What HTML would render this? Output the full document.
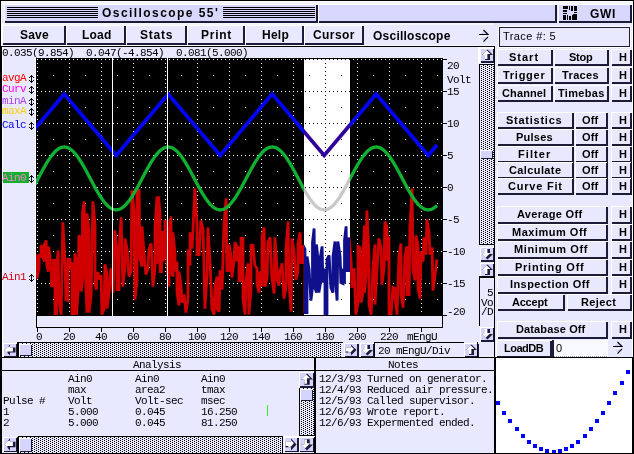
<!DOCTYPE html><html><head><meta charset="utf-8"><style>
*{margin:0;padding:0;box-sizing:border-box}
html,body{width:634px;height:454px;overflow:hidden;background:#E8E8FF}
div,span{position:absolute;display:block}
span{white-space:pre;will-change:transform}
.t{font:bold 12px "Liberation Sans",sans-serif;color:#000;line-height:18px}
.b{font:bold 12px "Liberation Sans",sans-serif;color:#000;line-height:15px}
.r{font:bold 11px "Liberation Sans",sans-serif;color:#000;line-height:14px}
.m{font:11px "Liberation Mono",monospace;letter-spacing:-0.6px;color:#000;line-height:12px}
.g{font:11px "Liberation Sans",sans-serif;color:#000;line-height:14px}
</style></head><body>
<div style="left:0px;top:0px;width:634px;height:454px;background:#E8E8FF;"></div>
<div style="left:0px;top:0px;width:634px;height:1px;background:#000;"></div>
<div style="left:0px;top:0px;width:1px;height:454px;background:#000;"></div>
<div style="left:633px;top:0px;width:1px;height:454px;background:#000;"></div>
<div style="left:0px;top:453px;width:634px;height:1px;background:#000;"></div>
<div style="left:1px;top:1px;width:632px;height:1px;background:#FFFFFF;"></div>
<div style="left:1px;top:1px;width:1px;height:45px;background:#FFFFFF;"></div>
<div style="left:632px;top:1px;width:1px;height:452px;background:#FFFFFF;"></div>
<div style="left:2px;top:2px;width:630px;height:3px;background:#F4F4FF;"></div>
<div style="left:4px;top:4px;width:312px;height:1px;background:#FFFFFF;"></div>
<div style="left:4px;top:4px;width:1px;height:17px;background:#FFFFFF;"></div>
<div style="left:5px;top:5px;width:311px;height:16px;background:#D8D8FF;"></div>
<div style="left:316px;top:5px;width:2px;height:18px;background:#1C1C38;"></div>
<div style="left:5px;top:21px;width:313px;height:2px;background:#1C1C38;"></div>
<div style="left:7px;top:7px;width:91px;height:1px;background:#000;"></div>
<div style="left:223px;top:7px;width:92px;height:1px;background:#000;"></div>
<div style="left:7px;top:9px;width:91px;height:1px;background:#000;"></div>
<div style="left:223px;top:9px;width:92px;height:1px;background:#000;"></div>
<div style="left:7px;top:11px;width:91px;height:1px;background:#000;"></div>
<div style="left:223px;top:11px;width:92px;height:1px;background:#000;"></div>
<div style="left:7px;top:13px;width:91px;height:1px;background:#000;"></div>
<div style="left:223px;top:13px;width:92px;height:1px;background:#000;"></div>
<div style="left:7px;top:15px;width:91px;height:1px;background:#000;"></div>
<div style="left:223px;top:15px;width:92px;height:1px;background:#000;"></div>
<div style="left:7px;top:17px;width:91px;height:1px;background:#000;"></div>
<div style="left:223px;top:17px;width:92px;height:1px;background:#000;"></div>
<div style="left:318px;top:4px;width:237px;height:1px;background:#FFFFFF;"></div>
<div style="left:318px;top:4px;width:1px;height:17px;background:#FFFFFF;"></div>
<div style="left:319px;top:5px;width:236px;height:16px;background:#D8D8FF;"></div>
<div style="left:555px;top:5px;width:2px;height:18px;background:#1C1C38;"></div>
<div style="left:319px;top:21px;width:238px;height:2px;background:#1C1C38;"></div>
<div style="left:558px;top:4px;width:72px;height:1px;background:#FFFFFF;"></div>
<div style="left:558px;top:4px;width:1px;height:17px;background:#FFFFFF;"></div>
<div style="left:559px;top:5px;width:71px;height:16px;background:#D8D8FF;"></div>
<div style="left:630px;top:5px;width:2px;height:18px;background:#1C1C38;"></div>
<div style="left:559px;top:21px;width:73px;height:2px;background:#1C1C38;"></div>
<svg style="position:absolute;left:0;top:0" width="634" height="30" shape-rendering="crispEdges"><g fill="#000"><rect x="563" y="6" width="5" height="3"/><rect x="569" y="6" width="1" height="4"/><rect x="571" y="6" width="2" height="5"/><rect x="574" y="6" width="3" height="5"/><rect x="563" y="10" width="4" height="2"/><rect x="563" y="13" width="4" height="1"/><rect x="574" y="12" width="3" height="1"/><rect x="563" y="15" width="3" height="5"/><rect x="567" y="15" width="1" height="5"/><rect x="569" y="16" width="2" height="4"/><rect x="572" y="15" width="5" height="5"/><rect x="573" y="14" width="4" height="1"/></g></svg>
<div style="left:2px;top:23px;width:492px;height:2px;background:#F4F4FF;"></div>
<div style="left:2px;top:25px;width:63px;height:19px;background:#FFFFFF;"></div>
<div style="left:3px;top:26px;width:61px;height:17px;background:#E8E8FF;"></div>
<div style="left:64px;top:26px;width:2px;height:19px;background:#1C1C38;"></div>
<div style="left:3px;top:43px;width:63px;height:2px;background:#1C1C38;"></div>
<div style="left:66px;top:25px;width:59px;height:19px;background:#FFFFFF;"></div>
<div style="left:67px;top:26px;width:57px;height:17px;background:#E8E8FF;"></div>
<div style="left:124px;top:26px;width:2px;height:19px;background:#1C1C38;"></div>
<div style="left:67px;top:43px;width:59px;height:2px;background:#1C1C38;"></div>
<div style="left:126px;top:25px;width:60px;height:19px;background:#FFFFFF;"></div>
<div style="left:127px;top:26px;width:58px;height:17px;background:#E8E8FF;"></div>
<div style="left:185px;top:26px;width:2px;height:19px;background:#1C1C38;"></div>
<div style="left:127px;top:43px;width:60px;height:2px;background:#1C1C38;"></div>
<div style="left:187px;top:25px;width:57px;height:19px;background:#FFFFFF;"></div>
<div style="left:188px;top:26px;width:55px;height:17px;background:#E8E8FF;"></div>
<div style="left:243px;top:26px;width:2px;height:19px;background:#1C1C38;"></div>
<div style="left:188px;top:43px;width:57px;height:2px;background:#1C1C38;"></div>
<div style="left:245px;top:25px;width:58px;height:19px;background:#FFFFFF;"></div>
<div style="left:246px;top:26px;width:56px;height:17px;background:#E8E8FF;"></div>
<div style="left:302px;top:26px;width:2px;height:19px;background:#1C1C38;"></div>
<div style="left:246px;top:43px;width:58px;height:2px;background:#1C1C38;"></div>
<div style="left:304px;top:25px;width:59px;height:19px;background:#FFFFFF;"></div>
<div style="left:305px;top:26px;width:57px;height:17px;background:#E8E8FF;"></div>
<div style="left:362px;top:26px;width:2px;height:19px;background:#1C1C38;"></div>
<div style="left:305px;top:43px;width:59px;height:2px;background:#1C1C38;"></div>
<div style="left:2px;top:45px;width:492px;height:1px;background:#F4F4FF;"></div>
<svg style="position:absolute;left:477px;top:28px" width="14" height="17" viewBox="0 0 14 17">
<path d="M2 6.5 L6.5 2 L11 6.5 Z" fill="#D4D4FF"/><path d="M2 8.8 L6.5 13.6 L11 8.8 Z" fill="#D4D4FF"/>
<path d="M2 6.5 L6.5 2 M2 8.8 L6.5 13.6 M2 8.8 L11 8.8" stroke="#FFF" stroke-width="1" fill="none"/>
<path d="M6.5 2 L11 6.5 L2 6.5 M11 8.8 L6.5 13.6" stroke="#000" stroke-width="1.1" fill="none"/></svg>
<div style="left:1px;top:46px;width:494px;height:1px;background:#000;"></div>
<div style="left:1px;top:46px;width:1px;height:408px;background:#000;"></div>
<div style="left:2px;top:47px;width:1px;height:310px;background:#FFFFFF;"></div>
<div style="left:494px;top:46px;width:1px;height:408px;background:#000;"></div>
<span class="m" style="left:2px;top:47px;">0.035(9.854)  0.047(-4.854)  0.081(5.000)</span>
<span class="m" style="left:2px;top:72px;color:#FF0000;">avgA</span>
<svg style="position:absolute;left:29px;top:75px" width="5" height="8" shape-rendering="crispEdges"><path d="M2 0h1v8h-1z M1 1h3v1h-3z M0 2h1v1h-1z M4 2h1v1h-1z M0 5h1v1h-1z M4 5h1v1h-1z M1 6h3v1h-3z" fill="#000"/></svg>
<span class="m" style="left:2px;top:83px;color:#FF00FF;">Curv</span>
<svg style="position:absolute;left:29px;top:86px" width="5" height="8" shape-rendering="crispEdges"><path d="M2 0h1v8h-1z M1 1h3v1h-3z M0 2h1v1h-1z M4 2h1v1h-1z M0 5h1v1h-1z M4 5h1v1h-1z M1 6h3v1h-3z" fill="#000"/></svg>
<span class="m" style="left:2px;top:95px;color:#B040F0;">minA</span>
<svg style="position:absolute;left:29px;top:98px" width="5" height="8" shape-rendering="crispEdges"><path d="M2 0h1v8h-1z M1 1h3v1h-3z M0 2h1v1h-1z M4 2h1v1h-1z M0 5h1v1h-1z M4 5h1v1h-1z M1 6h3v1h-3z" fill="#000"/></svg>
<span class="m" style="left:2px;top:105px;color:#FFD000;">maxA</span>
<svg style="position:absolute;left:29px;top:108px" width="5" height="8" shape-rendering="crispEdges"><path d="M2 0h1v8h-1z M1 1h3v1h-3z M0 2h1v1h-1z M4 2h1v1h-1z M0 5h1v1h-1z M4 5h1v1h-1z M1 6h3v1h-3z" fill="#000"/></svg>
<span class="m" style="left:2px;top:119px;color:#0000FF;">Calc</span>
<svg style="position:absolute;left:29px;top:122px" width="5" height="8" shape-rendering="crispEdges"><path d="M2 0h1v8h-1z M1 1h3v1h-3z M0 2h1v1h-1z M4 2h1v1h-1z M0 5h1v1h-1z M4 5h1v1h-1z M1 6h3v1h-3z" fill="#000"/></svg>
<div style="left:3px;top:172px;width:26px;height:11px;background:#10B030;"></div>
<span class="m" style="left:2px;top:172px;color:#FF80C8;">Ain0</span>
<svg style="position:absolute;left:29px;top:175px" width="5" height="8" shape-rendering="crispEdges"><path d="M2 0h1v8h-1z M1 1h3v1h-3z M0 2h1v1h-1z M4 2h1v1h-1z M0 5h1v1h-1z M4 5h1v1h-1z M1 6h3v1h-3z" fill="#000"/></svg>
<span class="m" style="left:2px;top:271px;color:#D00010;">Ain1</span>
<svg style="position:absolute;left:29px;top:274px" width="5" height="8" shape-rendering="crispEdges"><path d="M2 0h1v8h-1z M1 1h3v1h-3z M0 2h1v1h-1z M4 2h1v1h-1z M0 5h1v1h-1z M4 5h1v1h-1z M1 6h3v1h-3z" fill="#000"/></svg>
<div style="left:35px;top:57px;width:1px;height:259px;background:#FFFFFF;"></div>
<svg style="position:absolute;left:0;top:0" width="634" height="454" viewBox="0 0 634 454" shape-rendering="crispEdges">
<defs><clipPath id="bc"><rect x="304" y="59" width="46" height="256"/></clipPath><clipPath id="oc"><path d="M36 58H443V315H36Z M304 59V315H350V59Z" clip-rule="evenodd"/></clipPath></defs>
<rect x="36" y="58" width="407" height="258" fill="#000"/>
<rect x="304" y="59" width="46" height="256" fill="#FFF"/>
<path d="M37 59h1v1h-1zM37 63h1v1h-1zM37 67h1v1h-1zM37 71h1v1h-1zM37 75h1v1h-1zM37 79h1v1h-1zM37 83h1v1h-1zM37 87h1v1h-1zM37 91h1v1h-1zM37 95h1v1h-1zM37 99h1v1h-1zM37 103h1v1h-1zM37 107h1v1h-1zM37 111h1v1h-1zM37 115h1v1h-1zM37 119h1v1h-1zM37 123h1v1h-1zM37 127h1v1h-1zM37 131h1v1h-1zM37 135h1v1h-1zM37 139h1v1h-1zM37 143h1v1h-1zM37 147h1v1h-1zM37 151h1v1h-1zM37 155h1v1h-1zM37 159h1v1h-1zM37 163h1v1h-1zM37 167h1v1h-1zM37 171h1v1h-1zM37 175h1v1h-1zM37 179h1v1h-1zM37 183h1v1h-1zM37 187h1v1h-1zM37 191h1v1h-1zM37 195h1v1h-1zM37 199h1v1h-1zM37 203h1v1h-1zM37 207h1v1h-1zM37 211h1v1h-1zM37 215h1v1h-1zM37 219h1v1h-1zM37 223h1v1h-1zM37 227h1v1h-1zM37 231h1v1h-1zM37 235h1v1h-1zM37 239h1v1h-1zM37 243h1v1h-1zM37 247h1v1h-1zM37 251h1v1h-1zM37 255h1v1h-1zM37 259h1v1h-1zM37 263h1v1h-1zM37 267h1v1h-1zM37 271h1v1h-1zM37 275h1v1h-1zM37 279h1v1h-1zM37 283h1v1h-1zM37 287h1v1h-1zM37 291h1v1h-1zM37 295h1v1h-1zM37 299h1v1h-1zM37 303h1v1h-1zM37 307h1v1h-1zM37 311h1v1h-1zM41 59h1v1h-1zM41 91h1v1h-1zM41 123h1v1h-1zM41 155h1v1h-1zM41 187h1v1h-1zM41 219h1v1h-1zM41 251h1v1h-1zM41 283h1v1h-1zM45 59h1v1h-1zM45 91h1v1h-1zM45 123h1v1h-1zM45 155h1v1h-1zM45 187h1v1h-1zM45 219h1v1h-1zM45 251h1v1h-1zM45 283h1v1h-1zM49 59h1v1h-1zM49 91h1v1h-1zM49 123h1v1h-1zM49 155h1v1h-1zM49 187h1v1h-1zM49 219h1v1h-1zM49 251h1v1h-1zM49 283h1v1h-1zM53 59h1v1h-1zM53 75h1v1h-1zM53 91h1v1h-1zM53 107h1v1h-1zM53 123h1v1h-1zM53 139h1v1h-1zM53 155h1v1h-1zM53 171h1v1h-1zM53 187h1v1h-1zM53 203h1v1h-1zM53 219h1v1h-1zM53 235h1v1h-1zM53 251h1v1h-1zM53 267h1v1h-1zM53 283h1v1h-1zM53 299h1v1h-1zM57 59h1v1h-1zM57 91h1v1h-1zM57 123h1v1h-1zM57 155h1v1h-1zM57 187h1v1h-1zM57 219h1v1h-1zM57 251h1v1h-1zM57 283h1v1h-1zM61 59h1v1h-1zM61 91h1v1h-1zM61 123h1v1h-1zM61 155h1v1h-1zM61 187h1v1h-1zM61 219h1v1h-1zM61 251h1v1h-1zM61 283h1v1h-1zM65 59h1v1h-1zM65 91h1v1h-1zM65 123h1v1h-1zM65 155h1v1h-1zM65 187h1v1h-1zM65 219h1v1h-1zM65 251h1v1h-1zM65 283h1v1h-1zM69 59h1v1h-1zM69 63h1v1h-1zM69 67h1v1h-1zM69 71h1v1h-1zM69 75h1v1h-1zM69 79h1v1h-1zM69 83h1v1h-1zM69 87h1v1h-1zM69 91h1v1h-1zM69 95h1v1h-1zM69 99h1v1h-1zM69 103h1v1h-1zM69 107h1v1h-1zM69 111h1v1h-1zM69 115h1v1h-1zM69 119h1v1h-1zM69 123h1v1h-1zM69 127h1v1h-1zM69 131h1v1h-1zM69 135h1v1h-1zM69 139h1v1h-1zM69 143h1v1h-1zM69 147h1v1h-1zM69 151h1v1h-1zM69 155h1v1h-1zM69 159h1v1h-1zM69 163h1v1h-1zM69 167h1v1h-1zM69 171h1v1h-1zM69 175h1v1h-1zM69 179h1v1h-1zM69 183h1v1h-1zM69 187h1v1h-1zM69 191h1v1h-1zM69 195h1v1h-1zM69 199h1v1h-1zM69 203h1v1h-1zM69 207h1v1h-1zM69 211h1v1h-1zM69 215h1v1h-1zM69 219h1v1h-1zM69 223h1v1h-1zM69 227h1v1h-1zM69 231h1v1h-1zM69 235h1v1h-1zM69 239h1v1h-1zM69 243h1v1h-1zM69 247h1v1h-1zM69 251h1v1h-1zM69 255h1v1h-1zM69 259h1v1h-1zM69 263h1v1h-1zM69 267h1v1h-1zM69 271h1v1h-1zM69 275h1v1h-1zM69 279h1v1h-1zM69 283h1v1h-1zM69 287h1v1h-1zM69 291h1v1h-1zM69 295h1v1h-1zM69 299h1v1h-1zM69 303h1v1h-1zM69 307h1v1h-1zM69 311h1v1h-1zM73 59h1v1h-1zM73 91h1v1h-1zM73 123h1v1h-1zM73 155h1v1h-1zM73 187h1v1h-1zM73 219h1v1h-1zM73 251h1v1h-1zM73 283h1v1h-1zM77 59h1v1h-1zM77 91h1v1h-1zM77 123h1v1h-1zM77 155h1v1h-1zM77 187h1v1h-1zM77 219h1v1h-1zM77 251h1v1h-1zM77 283h1v1h-1zM81 59h1v1h-1zM81 91h1v1h-1zM81 123h1v1h-1zM81 155h1v1h-1zM81 187h1v1h-1zM81 219h1v1h-1zM81 251h1v1h-1zM81 283h1v1h-1zM85 59h1v1h-1zM85 75h1v1h-1zM85 91h1v1h-1zM85 107h1v1h-1zM85 123h1v1h-1zM85 139h1v1h-1zM85 155h1v1h-1zM85 171h1v1h-1zM85 187h1v1h-1zM85 203h1v1h-1zM85 219h1v1h-1zM85 235h1v1h-1zM85 251h1v1h-1zM85 267h1v1h-1zM85 283h1v1h-1zM85 299h1v1h-1zM89 59h1v1h-1zM89 91h1v1h-1zM89 123h1v1h-1zM89 155h1v1h-1zM89 187h1v1h-1zM89 219h1v1h-1zM89 251h1v1h-1zM89 283h1v1h-1zM93 59h1v1h-1zM93 91h1v1h-1zM93 123h1v1h-1zM93 155h1v1h-1zM93 187h1v1h-1zM93 219h1v1h-1zM93 251h1v1h-1zM93 283h1v1h-1zM97 59h1v1h-1zM97 91h1v1h-1zM97 123h1v1h-1zM97 155h1v1h-1zM97 187h1v1h-1zM97 219h1v1h-1zM97 251h1v1h-1zM97 283h1v1h-1zM101 59h1v1h-1zM101 63h1v1h-1zM101 67h1v1h-1zM101 71h1v1h-1zM101 75h1v1h-1zM101 79h1v1h-1zM101 83h1v1h-1zM101 87h1v1h-1zM101 91h1v1h-1zM101 95h1v1h-1zM101 99h1v1h-1zM101 103h1v1h-1zM101 107h1v1h-1zM101 111h1v1h-1zM101 115h1v1h-1zM101 119h1v1h-1zM101 123h1v1h-1zM101 127h1v1h-1zM101 131h1v1h-1zM101 135h1v1h-1zM101 139h1v1h-1zM101 143h1v1h-1zM101 147h1v1h-1zM101 151h1v1h-1zM101 155h1v1h-1zM101 159h1v1h-1zM101 163h1v1h-1zM101 167h1v1h-1zM101 171h1v1h-1zM101 175h1v1h-1zM101 179h1v1h-1zM101 183h1v1h-1zM101 187h1v1h-1zM101 191h1v1h-1zM101 195h1v1h-1zM101 199h1v1h-1zM101 203h1v1h-1zM101 207h1v1h-1zM101 211h1v1h-1zM101 215h1v1h-1zM101 219h1v1h-1zM101 223h1v1h-1zM101 227h1v1h-1zM101 231h1v1h-1zM101 235h1v1h-1zM101 239h1v1h-1zM101 243h1v1h-1zM101 247h1v1h-1zM101 251h1v1h-1zM101 255h1v1h-1zM101 259h1v1h-1zM101 263h1v1h-1zM101 267h1v1h-1zM101 271h1v1h-1zM101 275h1v1h-1zM101 279h1v1h-1zM101 283h1v1h-1zM101 287h1v1h-1zM101 291h1v1h-1zM101 295h1v1h-1zM101 299h1v1h-1zM101 303h1v1h-1zM101 307h1v1h-1zM101 311h1v1h-1zM105 59h1v1h-1zM105 91h1v1h-1zM105 123h1v1h-1zM105 155h1v1h-1zM105 187h1v1h-1zM105 219h1v1h-1zM105 251h1v1h-1zM105 283h1v1h-1zM109 59h1v1h-1zM109 91h1v1h-1zM109 123h1v1h-1zM109 155h1v1h-1zM109 187h1v1h-1zM109 219h1v1h-1zM109 251h1v1h-1zM109 283h1v1h-1zM113 59h1v1h-1zM113 91h1v1h-1zM113 123h1v1h-1zM113 155h1v1h-1zM113 187h1v1h-1zM113 219h1v1h-1zM113 251h1v1h-1zM113 283h1v1h-1zM117 59h1v1h-1zM117 75h1v1h-1zM117 91h1v1h-1zM117 107h1v1h-1zM117 123h1v1h-1zM117 139h1v1h-1zM117 155h1v1h-1zM117 171h1v1h-1zM117 187h1v1h-1zM117 203h1v1h-1zM117 219h1v1h-1zM117 235h1v1h-1zM117 251h1v1h-1zM117 267h1v1h-1zM117 283h1v1h-1zM117 299h1v1h-1zM121 59h1v1h-1zM121 91h1v1h-1zM121 123h1v1h-1zM121 155h1v1h-1zM121 187h1v1h-1zM121 219h1v1h-1zM121 251h1v1h-1zM121 283h1v1h-1zM125 59h1v1h-1zM125 91h1v1h-1zM125 123h1v1h-1zM125 155h1v1h-1zM125 187h1v1h-1zM125 219h1v1h-1zM125 251h1v1h-1zM125 283h1v1h-1zM129 59h1v1h-1zM129 91h1v1h-1zM129 123h1v1h-1zM129 155h1v1h-1zM129 187h1v1h-1zM129 219h1v1h-1zM129 251h1v1h-1zM129 283h1v1h-1zM133 59h1v1h-1zM133 63h1v1h-1zM133 67h1v1h-1zM133 71h1v1h-1zM133 75h1v1h-1zM133 79h1v1h-1zM133 83h1v1h-1zM133 87h1v1h-1zM133 91h1v1h-1zM133 95h1v1h-1zM133 99h1v1h-1zM133 103h1v1h-1zM133 107h1v1h-1zM133 111h1v1h-1zM133 115h1v1h-1zM133 119h1v1h-1zM133 123h1v1h-1zM133 127h1v1h-1zM133 131h1v1h-1zM133 135h1v1h-1zM133 139h1v1h-1zM133 143h1v1h-1zM133 147h1v1h-1zM133 151h1v1h-1zM133 155h1v1h-1zM133 159h1v1h-1zM133 163h1v1h-1zM133 167h1v1h-1zM133 171h1v1h-1zM133 175h1v1h-1zM133 179h1v1h-1zM133 183h1v1h-1zM133 187h1v1h-1zM133 191h1v1h-1zM133 195h1v1h-1zM133 199h1v1h-1zM133 203h1v1h-1zM133 207h1v1h-1zM133 211h1v1h-1zM133 215h1v1h-1zM133 219h1v1h-1zM133 223h1v1h-1zM133 227h1v1h-1zM133 231h1v1h-1zM133 235h1v1h-1zM133 239h1v1h-1zM133 243h1v1h-1zM133 247h1v1h-1zM133 251h1v1h-1zM133 255h1v1h-1zM133 259h1v1h-1zM133 263h1v1h-1zM133 267h1v1h-1zM133 271h1v1h-1zM133 275h1v1h-1zM133 279h1v1h-1zM133 283h1v1h-1zM133 287h1v1h-1zM133 291h1v1h-1zM133 295h1v1h-1zM133 299h1v1h-1zM133 303h1v1h-1zM133 307h1v1h-1zM133 311h1v1h-1zM137 59h1v1h-1zM137 91h1v1h-1zM137 123h1v1h-1zM137 155h1v1h-1zM137 187h1v1h-1zM137 219h1v1h-1zM137 251h1v1h-1zM137 283h1v1h-1zM141 59h1v1h-1zM141 91h1v1h-1zM141 123h1v1h-1zM141 155h1v1h-1zM141 187h1v1h-1zM141 219h1v1h-1zM141 251h1v1h-1zM141 283h1v1h-1zM145 59h1v1h-1zM145 91h1v1h-1zM145 123h1v1h-1zM145 155h1v1h-1zM145 187h1v1h-1zM145 219h1v1h-1zM145 251h1v1h-1zM145 283h1v1h-1zM149 59h1v1h-1zM149 75h1v1h-1zM149 91h1v1h-1zM149 107h1v1h-1zM149 123h1v1h-1zM149 139h1v1h-1zM149 155h1v1h-1zM149 171h1v1h-1zM149 187h1v1h-1zM149 203h1v1h-1zM149 219h1v1h-1zM149 235h1v1h-1zM149 251h1v1h-1zM149 267h1v1h-1zM149 283h1v1h-1zM149 299h1v1h-1zM153 59h1v1h-1zM153 91h1v1h-1zM153 123h1v1h-1zM153 155h1v1h-1zM153 187h1v1h-1zM153 219h1v1h-1zM153 251h1v1h-1zM153 283h1v1h-1zM157 59h1v1h-1zM157 91h1v1h-1zM157 123h1v1h-1zM157 155h1v1h-1zM157 187h1v1h-1zM157 219h1v1h-1zM157 251h1v1h-1zM157 283h1v1h-1zM161 59h1v1h-1zM161 91h1v1h-1zM161 123h1v1h-1zM161 155h1v1h-1zM161 187h1v1h-1zM161 219h1v1h-1zM161 251h1v1h-1zM161 283h1v1h-1zM165 59h1v1h-1zM165 63h1v1h-1zM165 67h1v1h-1zM165 71h1v1h-1zM165 75h1v1h-1zM165 79h1v1h-1zM165 83h1v1h-1zM165 87h1v1h-1zM165 91h1v1h-1zM165 95h1v1h-1zM165 99h1v1h-1zM165 103h1v1h-1zM165 107h1v1h-1zM165 111h1v1h-1zM165 115h1v1h-1zM165 119h1v1h-1zM165 123h1v1h-1zM165 127h1v1h-1zM165 131h1v1h-1zM165 135h1v1h-1zM165 139h1v1h-1zM165 143h1v1h-1zM165 147h1v1h-1zM165 151h1v1h-1zM165 155h1v1h-1zM165 159h1v1h-1zM165 163h1v1h-1zM165 167h1v1h-1zM165 171h1v1h-1zM165 175h1v1h-1zM165 179h1v1h-1zM165 183h1v1h-1zM165 187h1v1h-1zM165 191h1v1h-1zM165 195h1v1h-1zM165 199h1v1h-1zM165 203h1v1h-1zM165 207h1v1h-1zM165 211h1v1h-1zM165 215h1v1h-1zM165 219h1v1h-1zM165 223h1v1h-1zM165 227h1v1h-1zM165 231h1v1h-1zM165 235h1v1h-1zM165 239h1v1h-1zM165 243h1v1h-1zM165 247h1v1h-1zM165 251h1v1h-1zM165 255h1v1h-1zM165 259h1v1h-1zM165 263h1v1h-1zM165 267h1v1h-1zM165 271h1v1h-1zM165 275h1v1h-1zM165 279h1v1h-1zM165 283h1v1h-1zM165 287h1v1h-1zM165 291h1v1h-1zM165 295h1v1h-1zM165 299h1v1h-1zM165 303h1v1h-1zM165 307h1v1h-1zM165 311h1v1h-1zM169 59h1v1h-1zM169 91h1v1h-1zM169 123h1v1h-1zM169 155h1v1h-1zM169 187h1v1h-1zM169 219h1v1h-1zM169 251h1v1h-1zM169 283h1v1h-1zM173 59h1v1h-1zM173 91h1v1h-1zM173 123h1v1h-1zM173 155h1v1h-1zM173 187h1v1h-1zM173 219h1v1h-1zM173 251h1v1h-1zM173 283h1v1h-1zM177 59h1v1h-1zM177 91h1v1h-1zM177 123h1v1h-1zM177 155h1v1h-1zM177 187h1v1h-1zM177 219h1v1h-1zM177 251h1v1h-1zM177 283h1v1h-1zM181 59h1v1h-1zM181 75h1v1h-1zM181 91h1v1h-1zM181 107h1v1h-1zM181 123h1v1h-1zM181 139h1v1h-1zM181 155h1v1h-1zM181 171h1v1h-1zM181 187h1v1h-1zM181 203h1v1h-1zM181 219h1v1h-1zM181 235h1v1h-1zM181 251h1v1h-1zM181 267h1v1h-1zM181 283h1v1h-1zM181 299h1v1h-1zM185 59h1v1h-1zM185 91h1v1h-1zM185 123h1v1h-1zM185 155h1v1h-1zM185 187h1v1h-1zM185 219h1v1h-1zM185 251h1v1h-1zM185 283h1v1h-1zM189 59h1v1h-1zM189 91h1v1h-1zM189 123h1v1h-1zM189 155h1v1h-1zM189 187h1v1h-1zM189 219h1v1h-1zM189 251h1v1h-1zM189 283h1v1h-1zM193 59h1v1h-1zM193 91h1v1h-1zM193 123h1v1h-1zM193 155h1v1h-1zM193 187h1v1h-1zM193 219h1v1h-1zM193 251h1v1h-1zM193 283h1v1h-1zM197 59h1v1h-1zM197 63h1v1h-1zM197 67h1v1h-1zM197 71h1v1h-1zM197 75h1v1h-1zM197 79h1v1h-1zM197 83h1v1h-1zM197 87h1v1h-1zM197 91h1v1h-1zM197 95h1v1h-1zM197 99h1v1h-1zM197 103h1v1h-1zM197 107h1v1h-1zM197 111h1v1h-1zM197 115h1v1h-1zM197 119h1v1h-1zM197 123h1v1h-1zM197 127h1v1h-1zM197 131h1v1h-1zM197 135h1v1h-1zM197 139h1v1h-1zM197 143h1v1h-1zM197 147h1v1h-1zM197 151h1v1h-1zM197 155h1v1h-1zM197 159h1v1h-1zM197 163h1v1h-1zM197 167h1v1h-1zM197 171h1v1h-1zM197 175h1v1h-1zM197 179h1v1h-1zM197 183h1v1h-1zM197 187h1v1h-1zM197 191h1v1h-1zM197 195h1v1h-1zM197 199h1v1h-1zM197 203h1v1h-1zM197 207h1v1h-1zM197 211h1v1h-1zM197 215h1v1h-1zM197 219h1v1h-1zM197 223h1v1h-1zM197 227h1v1h-1zM197 231h1v1h-1zM197 235h1v1h-1zM197 239h1v1h-1zM197 243h1v1h-1zM197 247h1v1h-1zM197 251h1v1h-1zM197 255h1v1h-1zM197 259h1v1h-1zM197 263h1v1h-1zM197 267h1v1h-1zM197 271h1v1h-1zM197 275h1v1h-1zM197 279h1v1h-1zM197 283h1v1h-1zM197 287h1v1h-1zM197 291h1v1h-1zM197 295h1v1h-1zM197 299h1v1h-1zM197 303h1v1h-1zM197 307h1v1h-1zM197 311h1v1h-1zM201 59h1v1h-1zM201 91h1v1h-1zM201 123h1v1h-1zM201 155h1v1h-1zM201 187h1v1h-1zM201 219h1v1h-1zM201 251h1v1h-1zM201 283h1v1h-1zM205 59h1v1h-1zM205 91h1v1h-1zM205 123h1v1h-1zM205 155h1v1h-1zM205 187h1v1h-1zM205 219h1v1h-1zM205 251h1v1h-1zM205 283h1v1h-1zM209 59h1v1h-1zM209 91h1v1h-1zM209 123h1v1h-1zM209 155h1v1h-1zM209 187h1v1h-1zM209 219h1v1h-1zM209 251h1v1h-1zM209 283h1v1h-1zM213 59h1v1h-1zM213 75h1v1h-1zM213 91h1v1h-1zM213 107h1v1h-1zM213 123h1v1h-1zM213 139h1v1h-1zM213 155h1v1h-1zM213 171h1v1h-1zM213 187h1v1h-1zM213 203h1v1h-1zM213 219h1v1h-1zM213 235h1v1h-1zM213 251h1v1h-1zM213 267h1v1h-1zM213 283h1v1h-1zM213 299h1v1h-1zM217 59h1v1h-1zM217 91h1v1h-1zM217 123h1v1h-1zM217 155h1v1h-1zM217 187h1v1h-1zM217 219h1v1h-1zM217 251h1v1h-1zM217 283h1v1h-1zM221 59h1v1h-1zM221 91h1v1h-1zM221 123h1v1h-1zM221 155h1v1h-1zM221 187h1v1h-1zM221 219h1v1h-1zM221 251h1v1h-1zM221 283h1v1h-1zM225 59h1v1h-1zM225 91h1v1h-1zM225 123h1v1h-1zM225 155h1v1h-1zM225 187h1v1h-1zM225 219h1v1h-1zM225 251h1v1h-1zM225 283h1v1h-1zM229 59h1v1h-1zM229 63h1v1h-1zM229 67h1v1h-1zM229 71h1v1h-1zM229 75h1v1h-1zM229 79h1v1h-1zM229 83h1v1h-1zM229 87h1v1h-1zM229 91h1v1h-1zM229 95h1v1h-1zM229 99h1v1h-1zM229 103h1v1h-1zM229 107h1v1h-1zM229 111h1v1h-1zM229 115h1v1h-1zM229 119h1v1h-1zM229 123h1v1h-1zM229 127h1v1h-1zM229 131h1v1h-1zM229 135h1v1h-1zM229 139h1v1h-1zM229 143h1v1h-1zM229 147h1v1h-1zM229 151h1v1h-1zM229 155h1v1h-1zM229 159h1v1h-1zM229 163h1v1h-1zM229 167h1v1h-1zM229 171h1v1h-1zM229 175h1v1h-1zM229 179h1v1h-1zM229 183h1v1h-1zM229 187h1v1h-1zM229 191h1v1h-1zM229 195h1v1h-1zM229 199h1v1h-1zM229 203h1v1h-1zM229 207h1v1h-1zM229 211h1v1h-1zM229 215h1v1h-1zM229 219h1v1h-1zM229 223h1v1h-1zM229 227h1v1h-1zM229 231h1v1h-1zM229 235h1v1h-1zM229 239h1v1h-1zM229 243h1v1h-1zM229 247h1v1h-1zM229 251h1v1h-1zM229 255h1v1h-1zM229 259h1v1h-1zM229 263h1v1h-1zM229 267h1v1h-1zM229 271h1v1h-1zM229 275h1v1h-1zM229 279h1v1h-1zM229 283h1v1h-1zM229 287h1v1h-1zM229 291h1v1h-1zM229 295h1v1h-1zM229 299h1v1h-1zM229 303h1v1h-1zM229 307h1v1h-1zM229 311h1v1h-1zM233 59h1v1h-1zM233 91h1v1h-1zM233 123h1v1h-1zM233 155h1v1h-1zM233 187h1v1h-1zM233 219h1v1h-1zM233 251h1v1h-1zM233 283h1v1h-1zM237 59h1v1h-1zM237 91h1v1h-1zM237 123h1v1h-1zM237 155h1v1h-1zM237 187h1v1h-1zM237 219h1v1h-1zM237 251h1v1h-1zM237 283h1v1h-1zM241 59h1v1h-1zM241 91h1v1h-1zM241 123h1v1h-1zM241 155h1v1h-1zM241 187h1v1h-1zM241 219h1v1h-1zM241 251h1v1h-1zM241 283h1v1h-1zM245 59h1v1h-1zM245 75h1v1h-1zM245 91h1v1h-1zM245 107h1v1h-1zM245 123h1v1h-1zM245 139h1v1h-1zM245 155h1v1h-1zM245 171h1v1h-1zM245 187h1v1h-1zM245 203h1v1h-1zM245 219h1v1h-1zM245 235h1v1h-1zM245 251h1v1h-1zM245 267h1v1h-1zM245 283h1v1h-1zM245 299h1v1h-1zM249 59h1v1h-1zM249 91h1v1h-1zM249 123h1v1h-1zM249 155h1v1h-1zM249 187h1v1h-1zM249 219h1v1h-1zM249 251h1v1h-1zM249 283h1v1h-1zM253 59h1v1h-1zM253 91h1v1h-1zM253 123h1v1h-1zM253 155h1v1h-1zM253 187h1v1h-1zM253 219h1v1h-1zM253 251h1v1h-1zM253 283h1v1h-1zM257 59h1v1h-1zM257 91h1v1h-1zM257 123h1v1h-1zM257 155h1v1h-1zM257 187h1v1h-1zM257 219h1v1h-1zM257 251h1v1h-1zM257 283h1v1h-1zM261 59h1v1h-1zM261 63h1v1h-1zM261 67h1v1h-1zM261 71h1v1h-1zM261 75h1v1h-1zM261 79h1v1h-1zM261 83h1v1h-1zM261 87h1v1h-1zM261 91h1v1h-1zM261 95h1v1h-1zM261 99h1v1h-1zM261 103h1v1h-1zM261 107h1v1h-1zM261 111h1v1h-1zM261 115h1v1h-1zM261 119h1v1h-1zM261 123h1v1h-1zM261 127h1v1h-1zM261 131h1v1h-1zM261 135h1v1h-1zM261 139h1v1h-1zM261 143h1v1h-1zM261 147h1v1h-1zM261 151h1v1h-1zM261 155h1v1h-1zM261 159h1v1h-1zM261 163h1v1h-1zM261 167h1v1h-1zM261 171h1v1h-1zM261 175h1v1h-1zM261 179h1v1h-1zM261 183h1v1h-1zM261 187h1v1h-1zM261 191h1v1h-1zM261 195h1v1h-1zM261 199h1v1h-1zM261 203h1v1h-1zM261 207h1v1h-1zM261 211h1v1h-1zM261 215h1v1h-1zM261 219h1v1h-1zM261 223h1v1h-1zM261 227h1v1h-1zM261 231h1v1h-1zM261 235h1v1h-1zM261 239h1v1h-1zM261 243h1v1h-1zM261 247h1v1h-1zM261 251h1v1h-1zM261 255h1v1h-1zM261 259h1v1h-1zM261 263h1v1h-1zM261 267h1v1h-1zM261 271h1v1h-1zM261 275h1v1h-1zM261 279h1v1h-1zM261 283h1v1h-1zM261 287h1v1h-1zM261 291h1v1h-1zM261 295h1v1h-1zM261 299h1v1h-1zM261 303h1v1h-1zM261 307h1v1h-1zM261 311h1v1h-1zM265 59h1v1h-1zM265 91h1v1h-1zM265 123h1v1h-1zM265 155h1v1h-1zM265 187h1v1h-1zM265 219h1v1h-1zM265 251h1v1h-1zM265 283h1v1h-1zM269 59h1v1h-1zM269 91h1v1h-1zM269 123h1v1h-1zM269 155h1v1h-1zM269 187h1v1h-1zM269 219h1v1h-1zM269 251h1v1h-1zM269 283h1v1h-1zM273 59h1v1h-1zM273 91h1v1h-1zM273 123h1v1h-1zM273 155h1v1h-1zM273 187h1v1h-1zM273 219h1v1h-1zM273 251h1v1h-1zM273 283h1v1h-1zM277 59h1v1h-1zM277 75h1v1h-1zM277 91h1v1h-1zM277 107h1v1h-1zM277 123h1v1h-1zM277 139h1v1h-1zM277 155h1v1h-1zM277 171h1v1h-1zM277 187h1v1h-1zM277 203h1v1h-1zM277 219h1v1h-1zM277 235h1v1h-1zM277 251h1v1h-1zM277 267h1v1h-1zM277 283h1v1h-1zM277 299h1v1h-1zM281 59h1v1h-1zM281 91h1v1h-1zM281 123h1v1h-1zM281 155h1v1h-1zM281 187h1v1h-1zM281 219h1v1h-1zM281 251h1v1h-1zM281 283h1v1h-1zM285 59h1v1h-1zM285 91h1v1h-1zM285 123h1v1h-1zM285 155h1v1h-1zM285 187h1v1h-1zM285 219h1v1h-1zM285 251h1v1h-1zM285 283h1v1h-1zM289 59h1v1h-1zM289 91h1v1h-1zM289 123h1v1h-1zM289 155h1v1h-1zM289 187h1v1h-1zM289 219h1v1h-1zM289 251h1v1h-1zM289 283h1v1h-1zM293 59h1v1h-1zM293 63h1v1h-1zM293 67h1v1h-1zM293 71h1v1h-1zM293 75h1v1h-1zM293 79h1v1h-1zM293 83h1v1h-1zM293 87h1v1h-1zM293 91h1v1h-1zM293 95h1v1h-1zM293 99h1v1h-1zM293 103h1v1h-1zM293 107h1v1h-1zM293 111h1v1h-1zM293 115h1v1h-1zM293 119h1v1h-1zM293 123h1v1h-1zM293 127h1v1h-1zM293 131h1v1h-1zM293 135h1v1h-1zM293 139h1v1h-1zM293 143h1v1h-1zM293 147h1v1h-1zM293 151h1v1h-1zM293 155h1v1h-1zM293 159h1v1h-1zM293 163h1v1h-1zM293 167h1v1h-1zM293 171h1v1h-1zM293 175h1v1h-1zM293 179h1v1h-1zM293 183h1v1h-1zM293 187h1v1h-1zM293 191h1v1h-1zM293 195h1v1h-1zM293 199h1v1h-1zM293 203h1v1h-1zM293 207h1v1h-1zM293 211h1v1h-1zM293 215h1v1h-1zM293 219h1v1h-1zM293 223h1v1h-1zM293 227h1v1h-1zM293 231h1v1h-1zM293 235h1v1h-1zM293 239h1v1h-1zM293 243h1v1h-1zM293 247h1v1h-1zM293 251h1v1h-1zM293 255h1v1h-1zM293 259h1v1h-1zM293 263h1v1h-1zM293 267h1v1h-1zM293 271h1v1h-1zM293 275h1v1h-1zM293 279h1v1h-1zM293 283h1v1h-1zM293 287h1v1h-1zM293 291h1v1h-1zM293 295h1v1h-1zM293 299h1v1h-1zM293 303h1v1h-1zM293 307h1v1h-1zM293 311h1v1h-1zM297 59h1v1h-1zM297 91h1v1h-1zM297 123h1v1h-1zM297 155h1v1h-1zM297 187h1v1h-1zM297 219h1v1h-1zM297 251h1v1h-1zM297 283h1v1h-1zM301 59h1v1h-1zM301 91h1v1h-1zM301 123h1v1h-1zM301 155h1v1h-1zM301 187h1v1h-1zM301 219h1v1h-1zM301 251h1v1h-1zM301 283h1v1h-1zM353 59h1v1h-1zM353 91h1v1h-1zM353 123h1v1h-1zM353 155h1v1h-1zM353 187h1v1h-1zM353 219h1v1h-1zM353 251h1v1h-1zM353 283h1v1h-1zM357 59h1v1h-1zM357 63h1v1h-1zM357 67h1v1h-1zM357 71h1v1h-1zM357 75h1v1h-1zM357 79h1v1h-1zM357 83h1v1h-1zM357 87h1v1h-1zM357 91h1v1h-1zM357 95h1v1h-1zM357 99h1v1h-1zM357 103h1v1h-1zM357 107h1v1h-1zM357 111h1v1h-1zM357 115h1v1h-1zM357 119h1v1h-1zM357 123h1v1h-1zM357 127h1v1h-1zM357 131h1v1h-1zM357 135h1v1h-1zM357 139h1v1h-1zM357 143h1v1h-1zM357 147h1v1h-1zM357 151h1v1h-1zM357 155h1v1h-1zM357 159h1v1h-1zM357 163h1v1h-1zM357 167h1v1h-1zM357 171h1v1h-1zM357 175h1v1h-1zM357 179h1v1h-1zM357 183h1v1h-1zM357 187h1v1h-1zM357 191h1v1h-1zM357 195h1v1h-1zM357 199h1v1h-1zM357 203h1v1h-1zM357 207h1v1h-1zM357 211h1v1h-1zM357 215h1v1h-1zM357 219h1v1h-1zM357 223h1v1h-1zM357 227h1v1h-1zM357 231h1v1h-1zM357 235h1v1h-1zM357 239h1v1h-1zM357 243h1v1h-1zM357 247h1v1h-1zM357 251h1v1h-1zM357 255h1v1h-1zM357 259h1v1h-1zM357 263h1v1h-1zM357 267h1v1h-1zM357 271h1v1h-1zM357 275h1v1h-1zM357 279h1v1h-1zM357 283h1v1h-1zM357 287h1v1h-1zM357 291h1v1h-1zM357 295h1v1h-1zM357 299h1v1h-1zM357 303h1v1h-1zM357 307h1v1h-1zM357 311h1v1h-1zM361 59h1v1h-1zM361 91h1v1h-1zM361 123h1v1h-1zM361 155h1v1h-1zM361 187h1v1h-1zM361 219h1v1h-1zM361 251h1v1h-1zM361 283h1v1h-1zM365 59h1v1h-1zM365 91h1v1h-1zM365 123h1v1h-1zM365 155h1v1h-1zM365 187h1v1h-1zM365 219h1v1h-1zM365 251h1v1h-1zM365 283h1v1h-1zM369 59h1v1h-1zM369 91h1v1h-1zM369 123h1v1h-1zM369 155h1v1h-1zM369 187h1v1h-1zM369 219h1v1h-1zM369 251h1v1h-1zM369 283h1v1h-1zM373 59h1v1h-1zM373 75h1v1h-1zM373 91h1v1h-1zM373 107h1v1h-1zM373 123h1v1h-1zM373 139h1v1h-1zM373 155h1v1h-1zM373 171h1v1h-1zM373 187h1v1h-1zM373 203h1v1h-1zM373 219h1v1h-1zM373 235h1v1h-1zM373 251h1v1h-1zM373 267h1v1h-1zM373 283h1v1h-1zM373 299h1v1h-1zM377 59h1v1h-1zM377 91h1v1h-1zM377 123h1v1h-1zM377 155h1v1h-1zM377 187h1v1h-1zM377 219h1v1h-1zM377 251h1v1h-1zM377 283h1v1h-1zM381 59h1v1h-1zM381 91h1v1h-1zM381 123h1v1h-1zM381 155h1v1h-1zM381 187h1v1h-1zM381 219h1v1h-1zM381 251h1v1h-1zM381 283h1v1h-1zM385 59h1v1h-1zM385 91h1v1h-1zM385 123h1v1h-1zM385 155h1v1h-1zM385 187h1v1h-1zM385 219h1v1h-1zM385 251h1v1h-1zM385 283h1v1h-1zM389 59h1v1h-1zM389 63h1v1h-1zM389 67h1v1h-1zM389 71h1v1h-1zM389 75h1v1h-1zM389 79h1v1h-1zM389 83h1v1h-1zM389 87h1v1h-1zM389 91h1v1h-1zM389 95h1v1h-1zM389 99h1v1h-1zM389 103h1v1h-1zM389 107h1v1h-1zM389 111h1v1h-1zM389 115h1v1h-1zM389 119h1v1h-1zM389 123h1v1h-1zM389 127h1v1h-1zM389 131h1v1h-1zM389 135h1v1h-1zM389 139h1v1h-1zM389 143h1v1h-1zM389 147h1v1h-1zM389 151h1v1h-1zM389 155h1v1h-1zM389 159h1v1h-1zM389 163h1v1h-1zM389 167h1v1h-1zM389 171h1v1h-1zM389 175h1v1h-1zM389 179h1v1h-1zM389 183h1v1h-1zM389 187h1v1h-1zM389 191h1v1h-1zM389 195h1v1h-1zM389 199h1v1h-1zM389 203h1v1h-1zM389 207h1v1h-1zM389 211h1v1h-1zM389 215h1v1h-1zM389 219h1v1h-1zM389 223h1v1h-1zM389 227h1v1h-1zM389 231h1v1h-1zM389 235h1v1h-1zM389 239h1v1h-1zM389 243h1v1h-1zM389 247h1v1h-1zM389 251h1v1h-1zM389 255h1v1h-1zM389 259h1v1h-1zM389 263h1v1h-1zM389 267h1v1h-1zM389 271h1v1h-1zM389 275h1v1h-1zM389 279h1v1h-1zM389 283h1v1h-1zM389 287h1v1h-1zM389 291h1v1h-1zM389 295h1v1h-1zM389 299h1v1h-1zM389 303h1v1h-1zM389 307h1v1h-1zM389 311h1v1h-1zM393 59h1v1h-1zM393 91h1v1h-1zM393 123h1v1h-1zM393 155h1v1h-1zM393 187h1v1h-1zM393 219h1v1h-1zM393 251h1v1h-1zM393 283h1v1h-1zM397 59h1v1h-1zM397 91h1v1h-1zM397 123h1v1h-1zM397 155h1v1h-1zM397 187h1v1h-1zM397 219h1v1h-1zM397 251h1v1h-1zM397 283h1v1h-1zM401 59h1v1h-1zM401 91h1v1h-1zM401 123h1v1h-1zM401 155h1v1h-1zM401 187h1v1h-1zM401 219h1v1h-1zM401 251h1v1h-1zM401 283h1v1h-1zM405 59h1v1h-1zM405 75h1v1h-1zM405 91h1v1h-1zM405 107h1v1h-1zM405 123h1v1h-1zM405 139h1v1h-1zM405 155h1v1h-1zM405 171h1v1h-1zM405 187h1v1h-1zM405 203h1v1h-1zM405 219h1v1h-1zM405 235h1v1h-1zM405 251h1v1h-1zM405 267h1v1h-1zM405 283h1v1h-1zM405 299h1v1h-1zM409 59h1v1h-1zM409 91h1v1h-1zM409 123h1v1h-1zM409 155h1v1h-1zM409 187h1v1h-1zM409 219h1v1h-1zM409 251h1v1h-1zM409 283h1v1h-1zM413 59h1v1h-1zM413 91h1v1h-1zM413 123h1v1h-1zM413 155h1v1h-1zM413 187h1v1h-1zM413 219h1v1h-1zM413 251h1v1h-1zM413 283h1v1h-1zM417 59h1v1h-1zM417 91h1v1h-1zM417 123h1v1h-1zM417 155h1v1h-1zM417 187h1v1h-1zM417 219h1v1h-1zM417 251h1v1h-1zM417 283h1v1h-1zM421 59h1v1h-1zM421 63h1v1h-1zM421 67h1v1h-1zM421 71h1v1h-1zM421 75h1v1h-1zM421 79h1v1h-1zM421 83h1v1h-1zM421 87h1v1h-1zM421 91h1v1h-1zM421 95h1v1h-1zM421 99h1v1h-1zM421 103h1v1h-1zM421 107h1v1h-1zM421 111h1v1h-1zM421 115h1v1h-1zM421 119h1v1h-1zM421 123h1v1h-1zM421 127h1v1h-1zM421 131h1v1h-1zM421 135h1v1h-1zM421 139h1v1h-1zM421 143h1v1h-1zM421 147h1v1h-1zM421 151h1v1h-1zM421 155h1v1h-1zM421 159h1v1h-1zM421 163h1v1h-1zM421 167h1v1h-1zM421 171h1v1h-1zM421 175h1v1h-1zM421 179h1v1h-1zM421 183h1v1h-1zM421 187h1v1h-1zM421 191h1v1h-1zM421 195h1v1h-1zM421 199h1v1h-1zM421 203h1v1h-1zM421 207h1v1h-1zM421 211h1v1h-1zM421 215h1v1h-1zM421 219h1v1h-1zM421 223h1v1h-1zM421 227h1v1h-1zM421 231h1v1h-1zM421 235h1v1h-1zM421 239h1v1h-1zM421 243h1v1h-1zM421 247h1v1h-1zM421 251h1v1h-1zM421 255h1v1h-1zM421 259h1v1h-1zM421 263h1v1h-1zM421 267h1v1h-1zM421 271h1v1h-1zM421 275h1v1h-1zM421 279h1v1h-1zM421 283h1v1h-1zM421 287h1v1h-1zM421 291h1v1h-1zM421 295h1v1h-1zM421 299h1v1h-1zM421 303h1v1h-1zM421 307h1v1h-1zM421 311h1v1h-1zM425 59h1v1h-1zM425 91h1v1h-1zM425 123h1v1h-1zM425 155h1v1h-1zM425 187h1v1h-1zM425 219h1v1h-1zM425 251h1v1h-1zM425 283h1v1h-1zM429 59h1v1h-1zM429 91h1v1h-1zM429 123h1v1h-1zM429 155h1v1h-1zM429 187h1v1h-1zM429 219h1v1h-1zM429 251h1v1h-1zM429 283h1v1h-1zM433 59h1v1h-1zM433 91h1v1h-1zM433 123h1v1h-1zM433 155h1v1h-1zM433 187h1v1h-1zM433 219h1v1h-1zM433 251h1v1h-1zM433 283h1v1h-1zM437 59h1v1h-1zM437 75h1v1h-1zM437 91h1v1h-1zM437 107h1v1h-1zM437 123h1v1h-1zM437 139h1v1h-1zM437 155h1v1h-1zM437 171h1v1h-1zM437 187h1v1h-1zM437 203h1v1h-1zM437 219h1v1h-1zM437 235h1v1h-1zM437 251h1v1h-1zM437 267h1v1h-1zM437 283h1v1h-1zM437 299h1v1h-1zM441 59h1v1h-1zM441 91h1v1h-1zM441 123h1v1h-1zM441 155h1v1h-1zM441 187h1v1h-1zM441 219h1v1h-1zM441 251h1v1h-1zM441 283h1v1h-1z" fill="#FFF"/>
<path d="M305 59h1v1h-1zM305 91h1v1h-1zM305 123h1v1h-1zM305 155h1v1h-1zM305 187h1v1h-1zM305 219h1v1h-1zM305 251h1v1h-1zM305 283h1v1h-1zM309 59h1v1h-1zM309 75h1v1h-1zM309 91h1v1h-1zM309 107h1v1h-1zM309 123h1v1h-1zM309 139h1v1h-1zM309 155h1v1h-1zM309 171h1v1h-1zM309 187h1v1h-1zM309 203h1v1h-1zM309 219h1v1h-1zM309 235h1v1h-1zM309 251h1v1h-1zM309 267h1v1h-1zM309 283h1v1h-1zM309 299h1v1h-1zM313 59h1v1h-1zM313 91h1v1h-1zM313 123h1v1h-1zM313 155h1v1h-1zM313 187h1v1h-1zM313 219h1v1h-1zM313 251h1v1h-1zM313 283h1v1h-1zM317 59h1v1h-1zM317 91h1v1h-1zM317 123h1v1h-1zM317 155h1v1h-1zM317 187h1v1h-1zM317 219h1v1h-1zM317 251h1v1h-1zM317 283h1v1h-1zM321 59h1v1h-1zM321 91h1v1h-1zM321 123h1v1h-1zM321 155h1v1h-1zM321 187h1v1h-1zM321 219h1v1h-1zM321 251h1v1h-1zM321 283h1v1h-1zM325 59h1v1h-1zM325 63h1v1h-1zM325 67h1v1h-1zM325 71h1v1h-1zM325 75h1v1h-1zM325 79h1v1h-1zM325 83h1v1h-1zM325 87h1v1h-1zM325 91h1v1h-1zM325 95h1v1h-1zM325 99h1v1h-1zM325 103h1v1h-1zM325 107h1v1h-1zM325 111h1v1h-1zM325 115h1v1h-1zM325 119h1v1h-1zM325 123h1v1h-1zM325 127h1v1h-1zM325 131h1v1h-1zM325 135h1v1h-1zM325 139h1v1h-1zM325 143h1v1h-1zM325 147h1v1h-1zM325 151h1v1h-1zM325 155h1v1h-1zM325 159h1v1h-1zM325 163h1v1h-1zM325 167h1v1h-1zM325 171h1v1h-1zM325 175h1v1h-1zM325 179h1v1h-1zM325 183h1v1h-1zM325 187h1v1h-1zM325 191h1v1h-1zM325 195h1v1h-1zM325 199h1v1h-1zM325 203h1v1h-1zM325 207h1v1h-1zM325 211h1v1h-1zM325 215h1v1h-1zM325 219h1v1h-1zM325 223h1v1h-1zM325 227h1v1h-1zM325 231h1v1h-1zM325 235h1v1h-1zM325 239h1v1h-1zM325 243h1v1h-1zM325 247h1v1h-1zM325 251h1v1h-1zM325 255h1v1h-1zM325 259h1v1h-1zM325 263h1v1h-1zM325 267h1v1h-1zM325 271h1v1h-1zM325 275h1v1h-1zM325 279h1v1h-1zM325 283h1v1h-1zM325 287h1v1h-1zM325 291h1v1h-1zM325 295h1v1h-1zM325 299h1v1h-1zM325 303h1v1h-1zM325 307h1v1h-1zM325 311h1v1h-1zM329 59h1v1h-1zM329 91h1v1h-1zM329 123h1v1h-1zM329 155h1v1h-1zM329 187h1v1h-1zM329 219h1v1h-1zM329 251h1v1h-1zM329 283h1v1h-1zM333 59h1v1h-1zM333 91h1v1h-1zM333 123h1v1h-1zM333 155h1v1h-1zM333 187h1v1h-1zM333 219h1v1h-1zM333 251h1v1h-1zM333 283h1v1h-1zM337 59h1v1h-1zM337 91h1v1h-1zM337 123h1v1h-1zM337 155h1v1h-1zM337 187h1v1h-1zM337 219h1v1h-1zM337 251h1v1h-1zM337 283h1v1h-1zM341 59h1v1h-1zM341 75h1v1h-1zM341 91h1v1h-1zM341 107h1v1h-1zM341 123h1v1h-1zM341 139h1v1h-1zM341 155h1v1h-1zM341 171h1v1h-1zM341 187h1v1h-1zM341 203h1v1h-1zM341 219h1v1h-1zM341 235h1v1h-1zM341 251h1v1h-1zM341 267h1v1h-1zM341 283h1v1h-1zM341 299h1v1h-1zM345 59h1v1h-1zM345 91h1v1h-1zM345 123h1v1h-1zM345 155h1v1h-1zM345 187h1v1h-1zM345 219h1v1h-1zM345 251h1v1h-1zM345 283h1v1h-1zM349 59h1v1h-1zM349 91h1v1h-1zM349 123h1v1h-1zM349 155h1v1h-1zM349 187h1v1h-1zM349 219h1v1h-1zM349 251h1v1h-1zM349 283h1v1h-1z" fill="#000"/>
<g clip-path="url(#oc)">
<path d="M37.00 254.40 L37.00 278.60 L39.00 267.60 L39.00 254.40 L41.00 257.60 L41.00 245.40 L43.00 247.40 L43.00 257.60 L44.50 261.60 L44.50 244.40 L46.10 240.40 L46.90 265.60 L48.50 271.60 L48.50 246.40 L50.00 255.40 L50.00 271.60 L51.50 267.40 L51.50 285.60 L53.00 285.60 L53.00 260.40 L55.00 260.40 L55.00 314.60 L56.50 314.60 L56.50 269.40 L58.10 250.40 L58.90 298.60 L61.10 314.60 L62.90 222.40 L65.10 265.40 L65.90 299.60 L68.00 300.60 L68.00 259.40 L70.00 259.40 L70.00 269.60 L72.00 262.40 L72.00 314.60 L74.10 314.60 L74.90 253.40 L76.50 262.40 L76.50 314.60 L78.10 291.60 L78.90 235.40 L81.00 238.40 L81.00 291.60 L82.50 280.60 L82.50 213.40 L84.10 201.40 L84.90 264.60 L87.00 312.60 L87.00 213.40 L89.00 231.40 L89.00 312.60 L91.10 294.60 L92.90 201.40 L95.00 224.40 L95.00 284.60 L96.50 289.60 L96.50 274.40 L98.10 272.40 L98.90 279.60 L101.10 275.40 L101.90 314.60 L104.10 308.60 L104.90 264.40 L107.00 274.40 L107.00 308.60 L109.10 291.60 L110.90 268.40 L113.10 292.60 L114.90 230.40 L117.00 251.40 L117.00 289.60 L119.00 289.60 L119.00 251.40 L121.10 217.40 L122.90 286.60 L125.00 266.60 L125.00 238.40 L127.10 249.40 L128.90 276.60 L131.10 270.60 L131.90 190.40 L134.10 211.40 L134.90 299.60 L137.00 280.60 L137.00 190.40 L139.10 190.40 L139.90 258.60 L142.00 266.60 L142.00 226.40 L144.10 254.40 L145.90 274.60 L148.10 267.60 L148.90 249.40 L151.10 243.40 L152.90 286.60 L155.00 267.60 L155.00 228.40 L157.00 196.40 L157.00 263.60 L158.50 257.60 L158.50 196.40 L160.00 214.40 L160.00 271.60 L161.50 271.60 L161.50 232.40 L163.00 232.40 L163.00 261.60 L165.00 254.60 L165.00 221.40 L167.00 221.40 L167.00 263.60 L169.00 286.60 L169.00 233.40 L171.00 216.40 L171.00 271.60 L173.00 276.60 L173.00 232.40 L175.00 253.40 L175.00 271.60 L177.00 261.40 L177.00 292.60 L179.00 305.60 L179.00 271.40 L181.10 286.40 L181.90 302.60 L184.10 294.40 L185.90 312.60 L188.00 298.60 L188.00 249.40 L190.00 265.60 L190.00 232.40 L192.10 248.60 L194.90 188.40 L197.00 224.40 L197.00 254.60 L199.10 254.60 L200.90 220.40 L203.10 229.40 L204.90 308.60 L207.10 274.60 L207.90 227.40 L210.10 263.40 L211.90 308.60 L214.10 314.60 L214.90 288.40 L217.00 276.40 L217.00 308.60 L219.10 311.60 L219.90 270.40 L222.10 289.60 L223.90 226.40 L226.10 198.40 L226.90 270.60 L229.00 270.60 L229.00 244.40 L231.10 256.40 L231.90 277.60 L234.10 260.60 L234.90 242.40 L237.00 246.40 L237.00 261.60 L239.00 246.40 L239.00 280.60 L241.00 280.60 L241.00 238.40 L243.00 238.40 L243.00 298.60 L245.10 314.60 L245.90 281.40 L248.10 263.40 L248.90 314.60 L251.00 289.60 L251.00 245.40 L253.10 245.40 L254.90 265.60 L257.00 268.40 L257.00 284.60 L259.10 292.60 L259.90 271.40 L262.00 286.60 L262.00 236.40 L264.10 227.40 L264.90 286.60 L267.10 277.60 L267.90 242.40 L270.10 237.40 L271.90 277.60 L274.10 293.60 L274.90 237.40 L277.00 267.40 L277.00 279.60 L279.10 285.60 L279.90 271.40 L282.10 263.40 L283.90 298.60 L286.00 287.60 L286.00 248.40 L288.10 221.40 L288.90 280.60 L291.10 311.60 L291.90 238.40 L294.10 251.40 L295.90 279.60 L298.00 271.60 L298.00 244.40 L300.10 232.40 L300.90 262.60 L303.00 262.60 L303.00 245.40 L305.00 249.40 L305.00 312.60 L307.00 312.60 L307.00 256.40 L309.10 269.40 L310.90 300.60 L312.50 287.60 L312.50 242.40 L314.10 228.40 L314.90 287.60 L316.50 292.60 L316.50 244.40 L318.10 260.40 L318.90 292.60 L320.50 282.60 L320.50 256.40 L322.10 246.40 L322.90 282.60 L325.00 268.40 L325.00 314.60 L327.00 314.60 L327.00 259.40 L329.10 255.40 L330.90 287.60 L333.00 292.60 L333.00 256.40 L335.00 241.40 L335.00 274.60 L337.10 300.60 L337.90 241.40 L340.10 256.40 L340.90 282.60 L343.00 283.60 L343.00 268.40 L344.50 283.60 L344.50 240.40 L346.10 226.40 L346.90 270.60 L349.00 270.60 L349.00 237.40 L351.10 261.40 L351.90 287.60 L354.10 268.40 L355.90 314.60 L358.00 302.60 L358.00 246.40 L360.10 247.40 L360.90 302.60 L363.00 292.60 L363.00 256.40 L364.50 225.40 L364.50 292.60 L366.10 275.60 L366.90 210.40 L369.00 256.40 L369.00 304.60 L371.10 314.60 L372.90 268.40 L375.00 244.40 L375.00 304.60 L377.10 267.60 L378.90 238.40 L381.10 248.40 L381.90 284.60 L384.10 267.60 L384.90 221.40 L387.00 227.40 L387.00 260.60 L389.00 236.40 L389.00 314.60 L391.10 314.60 L392.90 287.40 L395.00 288.40 L395.00 297.60 L397.10 314.60 L398.90 256.40 L401.00 243.40 L401.00 294.60 L403.10 307.60 L404.90 256.40 L407.00 246.40 L407.00 294.60 L409.10 294.60 L409.90 227.40 L412.10 188.40 L412.90 269.60 L415.10 280.60 L415.90 235.40 L418.00 245.40 L418.00 288.60 L420.10 298.60 L420.90 251.40 L423.10 261.60 L423.90 237.40 L426.10 254.60 L426.90 219.40 L429.10 232.40 L429.90 254.60 L432.10 247.40 L432.90 290.60 L435.10 274.60 L436.90 259.40" stroke="#D00000" fill="none" stroke-width="2.8" stroke-linejoin="miter" stroke-miterlimit="2" shape-rendering="auto"/>
<polyline points="33.00,188.10 33.50,187.20 34.00,186.28 34.50,185.36 35.00,184.43 35.50,183.50 36.00,182.56 36.50,181.62 37.00,180.67 37.50,179.73 38.00,178.78 38.50,177.83 39.00,176.88 39.50,175.94 40.00,174.99 40.50,174.05 41.00,173.11 41.50,172.18 42.00,171.25 42.50,170.33 43.00,169.42 43.50,168.52 44.00,167.62 44.50,166.74 45.00,165.86 45.50,165.00 46.00,164.14 46.50,163.31 47.00,162.48 47.50,161.67 48.00,160.88 48.50,160.10 49.00,159.34 49.50,158.59 50.00,157.86 50.50,157.16 51.00,156.47 51.50,155.80 52.00,155.15 52.50,154.52 53.00,153.92 53.50,153.34 54.00,152.78 54.50,152.24 55.00,151.73 55.50,151.24 56.00,150.78 56.50,150.34 57.00,149.92 57.50,149.54 58.00,149.18 58.50,148.84 59.00,148.54 59.50,148.26 60.00,148.01 60.50,147.78 61.00,147.58 61.50,147.42 62.00,147.28 62.50,147.17 63.00,147.08 63.50,147.03 64.00,147.00 64.50,147.01 65.00,147.04 65.50,147.10 66.00,147.19 66.50,147.30 67.00,147.45 67.50,147.62 68.00,147.82 68.50,148.05 69.00,148.31 69.50,148.60 70.00,148.91 70.50,149.25 71.00,149.61 71.50,150.00 72.00,150.42 72.50,150.87 73.00,151.33 73.50,151.83 74.00,152.34 74.50,152.89 75.00,153.45 75.50,154.04 76.00,154.65 76.50,155.28 77.00,155.93 77.50,156.60 78.00,157.30 78.50,158.01 79.00,158.74 79.50,159.49 80.00,160.25 80.50,161.03 81.00,161.83 81.50,162.65 82.00,163.47 82.50,164.31 83.00,165.17 83.50,166.03 84.00,166.91 84.50,167.80 85.00,168.70 85.50,169.60 86.00,170.52 86.50,171.44 87.00,172.37 87.50,173.30 88.00,174.24 88.50,175.18 89.00,176.13 89.50,177.07 90.00,178.02 90.50,178.97 91.00,179.92 91.50,180.86 92.00,181.81 92.50,182.75 93.00,183.69 93.50,184.62 94.00,185.55 94.50,186.47 95.00,187.38 95.50,188.28 96.00,189.18 96.50,190.06 97.00,190.94 97.50,191.80 98.00,192.66 98.50,193.49 99.00,194.32 99.50,195.13 100.00,195.92 100.50,196.70 101.00,197.46 101.50,198.21 102.00,198.94 102.50,199.64 103.00,200.33 103.50,201.00 104.00,201.65 104.50,202.28 105.00,202.88 105.50,203.46 106.00,204.02 106.50,204.56 107.00,205.07 107.50,205.56 108.00,206.02 108.50,206.46 109.00,206.88 109.50,207.26 110.00,207.62 110.50,207.96 111.00,208.26 111.50,208.54 112.00,208.79 112.50,209.02 113.00,209.22 113.50,209.38 114.00,209.52 114.50,209.63 115.00,209.72 115.50,209.77 116.00,209.80 116.50,209.79 117.00,209.76 117.50,209.70 118.00,209.61 118.50,209.50 119.00,209.35 119.50,209.18 120.00,208.98 120.50,208.75 121.00,208.49 121.50,208.20 122.00,207.89 122.50,207.55 123.00,207.19 123.50,206.80 124.00,206.38 124.50,205.93 125.00,205.47 125.50,204.97 126.00,204.46 126.50,203.91 127.00,203.35 127.50,202.76 128.00,202.15 128.50,201.52 129.00,200.87 129.50,200.20 130.00,199.50 130.50,198.79 131.00,198.06 131.50,197.31 132.00,196.55 132.50,195.77 133.00,194.97 133.50,194.15 134.00,193.33 134.50,192.49 135.00,191.63 135.50,190.77 136.00,189.89 136.50,189.00 137.00,188.10 137.50,187.20 138.00,186.28 138.50,185.36 139.00,184.43 139.50,183.50 140.00,182.56 140.50,181.62 141.00,180.67 141.50,179.73 142.00,178.78 142.50,177.83 143.00,176.88 143.50,175.94 144.00,174.99 144.50,174.05 145.00,173.11 145.50,172.18 146.00,171.25 146.50,170.33 147.00,169.42 147.50,168.52 148.00,167.62 148.50,166.74 149.00,165.86 149.50,165.00 150.00,164.14 150.50,163.31 151.00,162.48 151.50,161.67 152.00,160.88 152.50,160.10 153.00,159.34 153.50,158.59 154.00,157.86 154.50,157.16 155.00,156.47 155.50,155.80 156.00,155.15 156.50,154.52 157.00,153.92 157.50,153.34 158.00,152.78 158.50,152.24 159.00,151.73 159.50,151.24 160.00,150.78 160.50,150.34 161.00,149.92 161.50,149.54 162.00,149.18 162.50,148.84 163.00,148.54 163.50,148.26 164.00,148.01 164.50,147.78 165.00,147.58 165.50,147.42 166.00,147.28 166.50,147.17 167.00,147.08 167.50,147.03 168.00,147.00 168.50,147.01 169.00,147.04 169.50,147.10 170.00,147.19 170.50,147.30 171.00,147.45 171.50,147.62 172.00,147.82 172.50,148.05 173.00,148.31 173.50,148.60 174.00,148.91 174.50,149.25 175.00,149.61 175.50,150.00 176.00,150.42 176.50,150.87 177.00,151.33 177.50,151.83 178.00,152.34 178.50,152.89 179.00,153.45 179.50,154.04 180.00,154.65 180.50,155.28 181.00,155.93 181.50,156.60 182.00,157.30 182.50,158.01 183.00,158.74 183.50,159.49 184.00,160.25 184.50,161.03 185.00,161.83 185.50,162.65 186.00,163.47 186.50,164.31 187.00,165.17 187.50,166.03 188.00,166.91 188.50,167.80 189.00,168.70 189.50,169.60 190.00,170.52 190.50,171.44 191.00,172.37 191.50,173.30 192.00,174.24 192.50,175.18 193.00,176.13 193.50,177.07 194.00,178.02 194.50,178.97 195.00,179.92 195.50,180.86 196.00,181.81 196.50,182.75 197.00,183.69 197.50,184.62 198.00,185.55 198.50,186.47 199.00,187.38 199.50,188.28 200.00,189.18 200.50,190.06 201.00,190.94 201.50,191.80 202.00,192.66 202.50,193.49 203.00,194.32 203.50,195.13 204.00,195.92 204.50,196.70 205.00,197.46 205.50,198.21 206.00,198.94 206.50,199.64 207.00,200.33 207.50,201.00 208.00,201.65 208.50,202.28 209.00,202.88 209.50,203.46 210.00,204.02 210.50,204.56 211.00,205.07 211.50,205.56 212.00,206.02 212.50,206.46 213.00,206.88 213.50,207.26 214.00,207.62 214.50,207.96 215.00,208.26 215.50,208.54 216.00,208.79 216.50,209.02 217.00,209.22 217.50,209.38 218.00,209.52 218.50,209.63 219.00,209.72 219.50,209.77 220.00,209.80 220.50,209.79 221.00,209.76 221.50,209.70 222.00,209.61 222.50,209.50 223.00,209.35 223.50,209.18 224.00,208.98 224.50,208.75 225.00,208.49 225.50,208.20 226.00,207.89 226.50,207.55 227.00,207.19 227.50,206.80 228.00,206.38 228.50,205.93 229.00,205.47 229.50,204.97 230.00,204.46 230.50,203.91 231.00,203.35 231.50,202.76 232.00,202.15 232.50,201.52 233.00,200.87 233.50,200.20 234.00,199.50 234.50,198.79 235.00,198.06 235.50,197.31 236.00,196.55 236.50,195.77 237.00,194.97 237.50,194.15 238.00,193.33 238.50,192.49 239.00,191.63 239.50,190.77 240.00,189.89 240.50,189.00 241.00,188.10 241.50,187.20 242.00,186.28 242.50,185.36 243.00,184.43 243.50,183.50 244.00,182.56 244.50,181.62 245.00,180.67 245.50,179.73 246.00,178.78 246.50,177.83 247.00,176.88 247.50,175.94 248.00,174.99 248.50,174.05 249.00,173.11 249.50,172.18 250.00,171.25 250.50,170.33 251.00,169.42 251.50,168.52 252.00,167.62 252.50,166.74 253.00,165.86 253.50,165.00 254.00,164.14 254.50,163.31 255.00,162.48 255.50,161.67 256.00,160.88 256.50,160.10 257.00,159.34 257.50,158.59 258.00,157.86 258.50,157.16 259.00,156.47 259.50,155.80 260.00,155.15 260.50,154.52 261.00,153.92 261.50,153.34 262.00,152.78 262.50,152.24 263.00,151.73 263.50,151.24 264.00,150.78 264.50,150.34 265.00,149.92 265.50,149.54 266.00,149.18 266.50,148.84 267.00,148.54 267.50,148.26 268.00,148.01 268.50,147.78 269.00,147.58 269.50,147.42 270.00,147.28 270.50,147.17 271.00,147.08 271.50,147.03 272.00,147.00 272.50,147.01 273.00,147.04 273.50,147.10 274.00,147.19 274.50,147.30 275.00,147.45 275.50,147.62 276.00,147.82 276.50,148.05 277.00,148.31 277.50,148.60 278.00,148.91 278.50,149.25 279.00,149.61 279.50,150.00 280.00,150.42 280.50,150.87 281.00,151.33 281.50,151.83 282.00,152.34 282.50,152.89 283.00,153.45 283.50,154.04 284.00,154.65 284.50,155.28 285.00,155.93 285.50,156.60 286.00,157.30 286.50,158.01 287.00,158.74 287.50,159.49 288.00,160.25 288.50,161.03 289.00,161.83 289.50,162.65 290.00,163.47 290.50,164.31 291.00,165.17 291.50,166.03 292.00,166.91 292.50,167.80 293.00,168.70 293.50,169.60 294.00,170.52 294.50,171.44 295.00,172.37 295.50,173.30 296.00,174.24 296.50,175.18 297.00,176.13 297.50,177.07 298.00,178.02 298.50,178.97 299.00,179.92 299.50,180.86 300.00,181.81 300.50,182.75 301.00,183.69 301.50,184.62 302.00,185.55 302.50,186.47 303.00,187.38 303.50,188.28 304.00,189.18 304.50,190.06 305.00,190.94 305.50,191.80 306.00,192.66 306.50,193.49 307.00,194.32 307.50,195.13 308.00,195.92 308.50,196.70 309.00,197.46 309.50,198.21 310.00,198.94 310.50,199.64 311.00,200.33 311.50,201.00 312.00,201.65 312.50,202.28 313.00,202.88 313.50,203.46 314.00,204.02 314.50,204.56 315.00,205.07 315.50,205.56 316.00,206.02 316.50,206.46 317.00,206.88 317.50,207.26 318.00,207.62 318.50,207.96 319.00,208.26 319.50,208.54 320.00,208.79 320.50,209.02 321.00,209.22 321.50,209.38 322.00,209.52 322.50,209.63 323.00,209.72 323.50,209.77 324.00,209.80 324.50,209.79 325.00,209.76 325.50,209.70 326.00,209.61 326.50,209.50 327.00,209.35 327.50,209.18 328.00,208.98 328.50,208.75 329.00,208.49 329.50,208.20 330.00,207.89 330.50,207.55 331.00,207.19 331.50,206.80 332.00,206.38 332.50,205.93 333.00,205.47 333.50,204.97 334.00,204.46 334.50,203.91 335.00,203.35 335.50,202.76 336.00,202.15 336.50,201.52 337.00,200.87 337.50,200.20 338.00,199.50 338.50,198.79 339.00,198.06 339.50,197.31 340.00,196.55 340.50,195.77 341.00,194.97 341.50,194.15 342.00,193.33 342.50,192.49 343.00,191.63 343.50,190.77 344.00,189.89 344.50,189.00 345.00,188.10 345.50,187.20 346.00,186.28 346.50,185.36 347.00,184.43 347.50,183.50 348.00,182.56 348.50,181.62 349.00,180.67 349.50,179.73 350.00,178.78 350.50,177.83 351.00,176.88 351.50,175.94 352.00,174.99 352.50,174.05 353.00,173.11 353.50,172.18 354.00,171.25 354.50,170.33 355.00,169.42 355.50,168.52 356.00,167.62 356.50,166.74 357.00,165.86 357.50,165.00 358.00,164.14 358.50,163.31 359.00,162.48 359.50,161.67 360.00,160.88 360.50,160.10 361.00,159.34 361.50,158.59 362.00,157.86 362.50,157.16 363.00,156.47 363.50,155.80 364.00,155.15 364.50,154.52 365.00,153.92 365.50,153.34 366.00,152.78 366.50,152.24 367.00,151.73 367.50,151.24 368.00,150.78 368.50,150.34 369.00,149.92 369.50,149.54 370.00,149.18 370.50,148.84 371.00,148.54 371.50,148.26 372.00,148.01 372.50,147.78 373.00,147.58 373.50,147.42 374.00,147.28 374.50,147.17 375.00,147.08 375.50,147.03 376.00,147.00 376.50,147.01 377.00,147.04 377.50,147.10 378.00,147.19 378.50,147.30 379.00,147.45 379.50,147.62 380.00,147.82 380.50,148.05 381.00,148.31 381.50,148.60 382.00,148.91 382.50,149.25 383.00,149.61 383.50,150.00 384.00,150.42 384.50,150.87 385.00,151.33 385.50,151.83 386.00,152.34 386.50,152.89 387.00,153.45 387.50,154.04 388.00,154.65 388.50,155.28 389.00,155.93 389.50,156.60 390.00,157.30 390.50,158.01 391.00,158.74 391.50,159.49 392.00,160.25 392.50,161.03 393.00,161.83 393.50,162.65 394.00,163.47 394.50,164.31 395.00,165.17 395.50,166.03 396.00,166.91 396.50,167.80 397.00,168.70 397.50,169.60 398.00,170.52 398.50,171.44 399.00,172.37 399.50,173.30 400.00,174.24 400.50,175.18 401.00,176.13 401.50,177.07 402.00,178.02 402.50,178.97 403.00,179.92 403.50,180.86 404.00,181.81 404.50,182.75 405.00,183.69 405.50,184.62 406.00,185.55 406.50,186.47 407.00,187.38 407.50,188.28 408.00,189.18 408.50,190.06 409.00,190.94 409.50,191.80 410.00,192.66 410.50,193.49 411.00,194.32 411.50,195.13 412.00,195.92 412.50,196.70 413.00,197.46 413.50,198.21 414.00,198.94 414.50,199.64 415.00,200.33 415.50,201.00 416.00,201.65 416.50,202.28 417.00,202.88 417.50,203.46 418.00,204.02 418.50,204.56 419.00,205.07 419.50,205.56 420.00,206.02 420.50,206.46 421.00,206.88 421.50,207.26 422.00,207.62 422.50,207.96 423.00,208.26 423.50,208.54 424.00,208.79 424.50,209.02 425.00,209.22 425.50,209.38 426.00,209.52 426.50,209.63 427.00,209.72 427.50,209.77 428.00,209.80 428.50,209.79 429.00,209.76 429.50,209.70 430.00,209.61 430.50,209.50 431.00,209.35 431.50,209.18 432.00,208.98 432.50,208.75 433.00,208.49 433.50,208.20 434.00,207.89 434.50,207.55 435.00,207.19 435.50,206.80 436.00,206.38 436.50,205.93 437.00,205.47" fill="none" stroke="#10B030" stroke-width="3.3" shape-rendering="auto"/>
<polyline points="33.00,130.82 64.20,94.00 116.20,155.36 168.20,94.00 220.20,155.36 272.20,94.00 324.20,155.36 376.20,94.00 428.20,155.36 437.00,144.98" fill="none" stroke="#0000FF" stroke-width="3.7" stroke-linejoin="miter" shape-rendering="auto"/>
</g><g clip-path="url(#bc)">
<path d="M37.00 254.40 L37.00 278.60 L39.00 267.60 L39.00 254.40 L41.00 257.60 L41.00 245.40 L43.00 247.40 L43.00 257.60 L44.50 261.60 L44.50 244.40 L46.10 240.40 L46.90 265.60 L48.50 271.60 L48.50 246.40 L50.00 255.40 L50.00 271.60 L51.50 267.40 L51.50 285.60 L53.00 285.60 L53.00 260.40 L55.00 260.40 L55.00 314.60 L56.50 314.60 L56.50 269.40 L58.10 250.40 L58.90 298.60 L61.10 314.60 L62.90 222.40 L65.10 265.40 L65.90 299.60 L68.00 300.60 L68.00 259.40 L70.00 259.40 L70.00 269.60 L72.00 262.40 L72.00 314.60 L74.10 314.60 L74.90 253.40 L76.50 262.40 L76.50 314.60 L78.10 291.60 L78.90 235.40 L81.00 238.40 L81.00 291.60 L82.50 280.60 L82.50 213.40 L84.10 201.40 L84.90 264.60 L87.00 312.60 L87.00 213.40 L89.00 231.40 L89.00 312.60 L91.10 294.60 L92.90 201.40 L95.00 224.40 L95.00 284.60 L96.50 289.60 L96.50 274.40 L98.10 272.40 L98.90 279.60 L101.10 275.40 L101.90 314.60 L104.10 308.60 L104.90 264.40 L107.00 274.40 L107.00 308.60 L109.10 291.60 L110.90 268.40 L113.10 292.60 L114.90 230.40 L117.00 251.40 L117.00 289.60 L119.00 289.60 L119.00 251.40 L121.10 217.40 L122.90 286.60 L125.00 266.60 L125.00 238.40 L127.10 249.40 L128.90 276.60 L131.10 270.60 L131.90 190.40 L134.10 211.40 L134.90 299.60 L137.00 280.60 L137.00 190.40 L139.10 190.40 L139.90 258.60 L142.00 266.60 L142.00 226.40 L144.10 254.40 L145.90 274.60 L148.10 267.60 L148.90 249.40 L151.10 243.40 L152.90 286.60 L155.00 267.60 L155.00 228.40 L157.00 196.40 L157.00 263.60 L158.50 257.60 L158.50 196.40 L160.00 214.40 L160.00 271.60 L161.50 271.60 L161.50 232.40 L163.00 232.40 L163.00 261.60 L165.00 254.60 L165.00 221.40 L167.00 221.40 L167.00 263.60 L169.00 286.60 L169.00 233.40 L171.00 216.40 L171.00 271.60 L173.00 276.60 L173.00 232.40 L175.00 253.40 L175.00 271.60 L177.00 261.40 L177.00 292.60 L179.00 305.60 L179.00 271.40 L181.10 286.40 L181.90 302.60 L184.10 294.40 L185.90 312.60 L188.00 298.60 L188.00 249.40 L190.00 265.60 L190.00 232.40 L192.10 248.60 L194.90 188.40 L197.00 224.40 L197.00 254.60 L199.10 254.60 L200.90 220.40 L203.10 229.40 L204.90 308.60 L207.10 274.60 L207.90 227.40 L210.10 263.40 L211.90 308.60 L214.10 314.60 L214.90 288.40 L217.00 276.40 L217.00 308.60 L219.10 311.60 L219.90 270.40 L222.10 289.60 L223.90 226.40 L226.10 198.40 L226.90 270.60 L229.00 270.60 L229.00 244.40 L231.10 256.40 L231.90 277.60 L234.10 260.60 L234.90 242.40 L237.00 246.40 L237.00 261.60 L239.00 246.40 L239.00 280.60 L241.00 280.60 L241.00 238.40 L243.00 238.40 L243.00 298.60 L245.10 314.60 L245.90 281.40 L248.10 263.40 L248.90 314.60 L251.00 289.60 L251.00 245.40 L253.10 245.40 L254.90 265.60 L257.00 268.40 L257.00 284.60 L259.10 292.60 L259.90 271.40 L262.00 286.60 L262.00 236.40 L264.10 227.40 L264.90 286.60 L267.10 277.60 L267.90 242.40 L270.10 237.40 L271.90 277.60 L274.10 293.60 L274.90 237.40 L277.00 267.40 L277.00 279.60 L279.10 285.60 L279.90 271.40 L282.10 263.40 L283.90 298.60 L286.00 287.60 L286.00 248.40 L288.10 221.40 L288.90 280.60 L291.10 311.60 L291.90 238.40 L294.10 251.40 L295.90 279.60 L298.00 271.60 L298.00 244.40 L300.10 232.40 L300.90 262.60 L303.00 262.60 L303.00 245.40 L305.00 249.40 L305.00 312.60 L307.00 312.60 L307.00 256.40 L309.10 269.40 L310.90 300.60 L312.50 287.60 L312.50 242.40 L314.10 228.40 L314.90 287.60 L316.50 292.60 L316.50 244.40 L318.10 260.40 L318.90 292.60 L320.50 282.60 L320.50 256.40 L322.10 246.40 L322.90 282.60 L325.00 268.40 L325.00 314.60 L327.00 314.60 L327.00 259.40 L329.10 255.40 L330.90 287.60 L333.00 292.60 L333.00 256.40 L335.00 241.40 L335.00 274.60 L337.10 300.60 L337.90 241.40 L340.10 256.40 L340.90 282.60 L343.00 283.60 L343.00 268.40 L344.50 283.60 L344.50 240.40 L346.10 226.40 L346.90 270.60 L349.00 270.60 L349.00 237.40 L351.10 261.40 L351.90 287.60 L354.10 268.40 L355.90 314.60 L358.00 302.60 L358.00 246.40 L360.10 247.40 L360.90 302.60 L363.00 292.60 L363.00 256.40 L364.50 225.40 L364.50 292.60 L366.10 275.60 L366.90 210.40 L369.00 256.40 L369.00 304.60 L371.10 314.60 L372.90 268.40 L375.00 244.40 L375.00 304.60 L377.10 267.60 L378.90 238.40 L381.10 248.40 L381.90 284.60 L384.10 267.60 L384.90 221.40 L387.00 227.40 L387.00 260.60 L389.00 236.40 L389.00 314.60 L391.10 314.60 L392.90 287.40 L395.00 288.40 L395.00 297.60 L397.10 314.60 L398.90 256.40 L401.00 243.40 L401.00 294.60 L403.10 307.60 L404.90 256.40 L407.00 246.40 L407.00 294.60 L409.10 294.60 L409.90 227.40 L412.10 188.40 L412.90 269.60 L415.10 280.60 L415.90 235.40 L418.00 245.40 L418.00 288.60 L420.10 298.60 L420.90 251.40 L423.10 261.60 L423.90 237.40 L426.10 254.60 L426.90 219.40 L429.10 232.40 L429.90 254.60 L432.10 247.40 L432.90 290.60 L435.10 274.60 L436.90 259.40" stroke="#10108C" fill="none" stroke-width="2.8" stroke-linejoin="miter" stroke-miterlimit="2" shape-rendering="auto"/>
<polyline points="33.00,188.10 33.50,187.20 34.00,186.28 34.50,185.36 35.00,184.43 35.50,183.50 36.00,182.56 36.50,181.62 37.00,180.67 37.50,179.73 38.00,178.78 38.50,177.83 39.00,176.88 39.50,175.94 40.00,174.99 40.50,174.05 41.00,173.11 41.50,172.18 42.00,171.25 42.50,170.33 43.00,169.42 43.50,168.52 44.00,167.62 44.50,166.74 45.00,165.86 45.50,165.00 46.00,164.14 46.50,163.31 47.00,162.48 47.50,161.67 48.00,160.88 48.50,160.10 49.00,159.34 49.50,158.59 50.00,157.86 50.50,157.16 51.00,156.47 51.50,155.80 52.00,155.15 52.50,154.52 53.00,153.92 53.50,153.34 54.00,152.78 54.50,152.24 55.00,151.73 55.50,151.24 56.00,150.78 56.50,150.34 57.00,149.92 57.50,149.54 58.00,149.18 58.50,148.84 59.00,148.54 59.50,148.26 60.00,148.01 60.50,147.78 61.00,147.58 61.50,147.42 62.00,147.28 62.50,147.17 63.00,147.08 63.50,147.03 64.00,147.00 64.50,147.01 65.00,147.04 65.50,147.10 66.00,147.19 66.50,147.30 67.00,147.45 67.50,147.62 68.00,147.82 68.50,148.05 69.00,148.31 69.50,148.60 70.00,148.91 70.50,149.25 71.00,149.61 71.50,150.00 72.00,150.42 72.50,150.87 73.00,151.33 73.50,151.83 74.00,152.34 74.50,152.89 75.00,153.45 75.50,154.04 76.00,154.65 76.50,155.28 77.00,155.93 77.50,156.60 78.00,157.30 78.50,158.01 79.00,158.74 79.50,159.49 80.00,160.25 80.50,161.03 81.00,161.83 81.50,162.65 82.00,163.47 82.50,164.31 83.00,165.17 83.50,166.03 84.00,166.91 84.50,167.80 85.00,168.70 85.50,169.60 86.00,170.52 86.50,171.44 87.00,172.37 87.50,173.30 88.00,174.24 88.50,175.18 89.00,176.13 89.50,177.07 90.00,178.02 90.50,178.97 91.00,179.92 91.50,180.86 92.00,181.81 92.50,182.75 93.00,183.69 93.50,184.62 94.00,185.55 94.50,186.47 95.00,187.38 95.50,188.28 96.00,189.18 96.50,190.06 97.00,190.94 97.50,191.80 98.00,192.66 98.50,193.49 99.00,194.32 99.50,195.13 100.00,195.92 100.50,196.70 101.00,197.46 101.50,198.21 102.00,198.94 102.50,199.64 103.00,200.33 103.50,201.00 104.00,201.65 104.50,202.28 105.00,202.88 105.50,203.46 106.00,204.02 106.50,204.56 107.00,205.07 107.50,205.56 108.00,206.02 108.50,206.46 109.00,206.88 109.50,207.26 110.00,207.62 110.50,207.96 111.00,208.26 111.50,208.54 112.00,208.79 112.50,209.02 113.00,209.22 113.50,209.38 114.00,209.52 114.50,209.63 115.00,209.72 115.50,209.77 116.00,209.80 116.50,209.79 117.00,209.76 117.50,209.70 118.00,209.61 118.50,209.50 119.00,209.35 119.50,209.18 120.00,208.98 120.50,208.75 121.00,208.49 121.50,208.20 122.00,207.89 122.50,207.55 123.00,207.19 123.50,206.80 124.00,206.38 124.50,205.93 125.00,205.47 125.50,204.97 126.00,204.46 126.50,203.91 127.00,203.35 127.50,202.76 128.00,202.15 128.50,201.52 129.00,200.87 129.50,200.20 130.00,199.50 130.50,198.79 131.00,198.06 131.50,197.31 132.00,196.55 132.50,195.77 133.00,194.97 133.50,194.15 134.00,193.33 134.50,192.49 135.00,191.63 135.50,190.77 136.00,189.89 136.50,189.00 137.00,188.10 137.50,187.20 138.00,186.28 138.50,185.36 139.00,184.43 139.50,183.50 140.00,182.56 140.50,181.62 141.00,180.67 141.50,179.73 142.00,178.78 142.50,177.83 143.00,176.88 143.50,175.94 144.00,174.99 144.50,174.05 145.00,173.11 145.50,172.18 146.00,171.25 146.50,170.33 147.00,169.42 147.50,168.52 148.00,167.62 148.50,166.74 149.00,165.86 149.50,165.00 150.00,164.14 150.50,163.31 151.00,162.48 151.50,161.67 152.00,160.88 152.50,160.10 153.00,159.34 153.50,158.59 154.00,157.86 154.50,157.16 155.00,156.47 155.50,155.80 156.00,155.15 156.50,154.52 157.00,153.92 157.50,153.34 158.00,152.78 158.50,152.24 159.00,151.73 159.50,151.24 160.00,150.78 160.50,150.34 161.00,149.92 161.50,149.54 162.00,149.18 162.50,148.84 163.00,148.54 163.50,148.26 164.00,148.01 164.50,147.78 165.00,147.58 165.50,147.42 166.00,147.28 166.50,147.17 167.00,147.08 167.50,147.03 168.00,147.00 168.50,147.01 169.00,147.04 169.50,147.10 170.00,147.19 170.50,147.30 171.00,147.45 171.50,147.62 172.00,147.82 172.50,148.05 173.00,148.31 173.50,148.60 174.00,148.91 174.50,149.25 175.00,149.61 175.50,150.00 176.00,150.42 176.50,150.87 177.00,151.33 177.50,151.83 178.00,152.34 178.50,152.89 179.00,153.45 179.50,154.04 180.00,154.65 180.50,155.28 181.00,155.93 181.50,156.60 182.00,157.30 182.50,158.01 183.00,158.74 183.50,159.49 184.00,160.25 184.50,161.03 185.00,161.83 185.50,162.65 186.00,163.47 186.50,164.31 187.00,165.17 187.50,166.03 188.00,166.91 188.50,167.80 189.00,168.70 189.50,169.60 190.00,170.52 190.50,171.44 191.00,172.37 191.50,173.30 192.00,174.24 192.50,175.18 193.00,176.13 193.50,177.07 194.00,178.02 194.50,178.97 195.00,179.92 195.50,180.86 196.00,181.81 196.50,182.75 197.00,183.69 197.50,184.62 198.00,185.55 198.50,186.47 199.00,187.38 199.50,188.28 200.00,189.18 200.50,190.06 201.00,190.94 201.50,191.80 202.00,192.66 202.50,193.49 203.00,194.32 203.50,195.13 204.00,195.92 204.50,196.70 205.00,197.46 205.50,198.21 206.00,198.94 206.50,199.64 207.00,200.33 207.50,201.00 208.00,201.65 208.50,202.28 209.00,202.88 209.50,203.46 210.00,204.02 210.50,204.56 211.00,205.07 211.50,205.56 212.00,206.02 212.50,206.46 213.00,206.88 213.50,207.26 214.00,207.62 214.50,207.96 215.00,208.26 215.50,208.54 216.00,208.79 216.50,209.02 217.00,209.22 217.50,209.38 218.00,209.52 218.50,209.63 219.00,209.72 219.50,209.77 220.00,209.80 220.50,209.79 221.00,209.76 221.50,209.70 222.00,209.61 222.50,209.50 223.00,209.35 223.50,209.18 224.00,208.98 224.50,208.75 225.00,208.49 225.50,208.20 226.00,207.89 226.50,207.55 227.00,207.19 227.50,206.80 228.00,206.38 228.50,205.93 229.00,205.47 229.50,204.97 230.00,204.46 230.50,203.91 231.00,203.35 231.50,202.76 232.00,202.15 232.50,201.52 233.00,200.87 233.50,200.20 234.00,199.50 234.50,198.79 235.00,198.06 235.50,197.31 236.00,196.55 236.50,195.77 237.00,194.97 237.50,194.15 238.00,193.33 238.50,192.49 239.00,191.63 239.50,190.77 240.00,189.89 240.50,189.00 241.00,188.10 241.50,187.20 242.00,186.28 242.50,185.36 243.00,184.43 243.50,183.50 244.00,182.56 244.50,181.62 245.00,180.67 245.50,179.73 246.00,178.78 246.50,177.83 247.00,176.88 247.50,175.94 248.00,174.99 248.50,174.05 249.00,173.11 249.50,172.18 250.00,171.25 250.50,170.33 251.00,169.42 251.50,168.52 252.00,167.62 252.50,166.74 253.00,165.86 253.50,165.00 254.00,164.14 254.50,163.31 255.00,162.48 255.50,161.67 256.00,160.88 256.50,160.10 257.00,159.34 257.50,158.59 258.00,157.86 258.50,157.16 259.00,156.47 259.50,155.80 260.00,155.15 260.50,154.52 261.00,153.92 261.50,153.34 262.00,152.78 262.50,152.24 263.00,151.73 263.50,151.24 264.00,150.78 264.50,150.34 265.00,149.92 265.50,149.54 266.00,149.18 266.50,148.84 267.00,148.54 267.50,148.26 268.00,148.01 268.50,147.78 269.00,147.58 269.50,147.42 270.00,147.28 270.50,147.17 271.00,147.08 271.50,147.03 272.00,147.00 272.50,147.01 273.00,147.04 273.50,147.10 274.00,147.19 274.50,147.30 275.00,147.45 275.50,147.62 276.00,147.82 276.50,148.05 277.00,148.31 277.50,148.60 278.00,148.91 278.50,149.25 279.00,149.61 279.50,150.00 280.00,150.42 280.50,150.87 281.00,151.33 281.50,151.83 282.00,152.34 282.50,152.89 283.00,153.45 283.50,154.04 284.00,154.65 284.50,155.28 285.00,155.93 285.50,156.60 286.00,157.30 286.50,158.01 287.00,158.74 287.50,159.49 288.00,160.25 288.50,161.03 289.00,161.83 289.50,162.65 290.00,163.47 290.50,164.31 291.00,165.17 291.50,166.03 292.00,166.91 292.50,167.80 293.00,168.70 293.50,169.60 294.00,170.52 294.50,171.44 295.00,172.37 295.50,173.30 296.00,174.24 296.50,175.18 297.00,176.13 297.50,177.07 298.00,178.02 298.50,178.97 299.00,179.92 299.50,180.86 300.00,181.81 300.50,182.75 301.00,183.69 301.50,184.62 302.00,185.55 302.50,186.47 303.00,187.38 303.50,188.28 304.00,189.18 304.50,190.06 305.00,190.94 305.50,191.80 306.00,192.66 306.50,193.49 307.00,194.32 307.50,195.13 308.00,195.92 308.50,196.70 309.00,197.46 309.50,198.21 310.00,198.94 310.50,199.64 311.00,200.33 311.50,201.00 312.00,201.65 312.50,202.28 313.00,202.88 313.50,203.46 314.00,204.02 314.50,204.56 315.00,205.07 315.50,205.56 316.00,206.02 316.50,206.46 317.00,206.88 317.50,207.26 318.00,207.62 318.50,207.96 319.00,208.26 319.50,208.54 320.00,208.79 320.50,209.02 321.00,209.22 321.50,209.38 322.00,209.52 322.50,209.63 323.00,209.72 323.50,209.77 324.00,209.80 324.50,209.79 325.00,209.76 325.50,209.70 326.00,209.61 326.50,209.50 327.00,209.35 327.50,209.18 328.00,208.98 328.50,208.75 329.00,208.49 329.50,208.20 330.00,207.89 330.50,207.55 331.00,207.19 331.50,206.80 332.00,206.38 332.50,205.93 333.00,205.47 333.50,204.97 334.00,204.46 334.50,203.91 335.00,203.35 335.50,202.76 336.00,202.15 336.50,201.52 337.00,200.87 337.50,200.20 338.00,199.50 338.50,198.79 339.00,198.06 339.50,197.31 340.00,196.55 340.50,195.77 341.00,194.97 341.50,194.15 342.00,193.33 342.50,192.49 343.00,191.63 343.50,190.77 344.00,189.89 344.50,189.00 345.00,188.10 345.50,187.20 346.00,186.28 346.50,185.36 347.00,184.43 347.50,183.50 348.00,182.56 348.50,181.62 349.00,180.67 349.50,179.73 350.00,178.78 350.50,177.83 351.00,176.88 351.50,175.94 352.00,174.99 352.50,174.05 353.00,173.11 353.50,172.18 354.00,171.25 354.50,170.33 355.00,169.42 355.50,168.52 356.00,167.62 356.50,166.74 357.00,165.86 357.50,165.00 358.00,164.14 358.50,163.31 359.00,162.48 359.50,161.67 360.00,160.88 360.50,160.10 361.00,159.34 361.50,158.59 362.00,157.86 362.50,157.16 363.00,156.47 363.50,155.80 364.00,155.15 364.50,154.52 365.00,153.92 365.50,153.34 366.00,152.78 366.50,152.24 367.00,151.73 367.50,151.24 368.00,150.78 368.50,150.34 369.00,149.92 369.50,149.54 370.00,149.18 370.50,148.84 371.00,148.54 371.50,148.26 372.00,148.01 372.50,147.78 373.00,147.58 373.50,147.42 374.00,147.28 374.50,147.17 375.00,147.08 375.50,147.03 376.00,147.00 376.50,147.01 377.00,147.04 377.50,147.10 378.00,147.19 378.50,147.30 379.00,147.45 379.50,147.62 380.00,147.82 380.50,148.05 381.00,148.31 381.50,148.60 382.00,148.91 382.50,149.25 383.00,149.61 383.50,150.00 384.00,150.42 384.50,150.87 385.00,151.33 385.50,151.83 386.00,152.34 386.50,152.89 387.00,153.45 387.50,154.04 388.00,154.65 388.50,155.28 389.00,155.93 389.50,156.60 390.00,157.30 390.50,158.01 391.00,158.74 391.50,159.49 392.00,160.25 392.50,161.03 393.00,161.83 393.50,162.65 394.00,163.47 394.50,164.31 395.00,165.17 395.50,166.03 396.00,166.91 396.50,167.80 397.00,168.70 397.50,169.60 398.00,170.52 398.50,171.44 399.00,172.37 399.50,173.30 400.00,174.24 400.50,175.18 401.00,176.13 401.50,177.07 402.00,178.02 402.50,178.97 403.00,179.92 403.50,180.86 404.00,181.81 404.50,182.75 405.00,183.69 405.50,184.62 406.00,185.55 406.50,186.47 407.00,187.38 407.50,188.28 408.00,189.18 408.50,190.06 409.00,190.94 409.50,191.80 410.00,192.66 410.50,193.49 411.00,194.32 411.50,195.13 412.00,195.92 412.50,196.70 413.00,197.46 413.50,198.21 414.00,198.94 414.50,199.64 415.00,200.33 415.50,201.00 416.00,201.65 416.50,202.28 417.00,202.88 417.50,203.46 418.00,204.02 418.50,204.56 419.00,205.07 419.50,205.56 420.00,206.02 420.50,206.46 421.00,206.88 421.50,207.26 422.00,207.62 422.50,207.96 423.00,208.26 423.50,208.54 424.00,208.79 424.50,209.02 425.00,209.22 425.50,209.38 426.00,209.52 426.50,209.63 427.00,209.72 427.50,209.77 428.00,209.80 428.50,209.79 429.00,209.76 429.50,209.70 430.00,209.61 430.50,209.50 431.00,209.35 431.50,209.18 432.00,208.98 432.50,208.75 433.00,208.49 433.50,208.20 434.00,207.89 434.50,207.55 435.00,207.19 435.50,206.80 436.00,206.38 436.50,205.93 437.00,205.47" fill="none" stroke="#C8C8C8" stroke-width="3.3" shape-rendering="auto"/>
<polyline points="33.00,130.82 64.20,94.00 116.20,155.36 168.20,94.00 220.20,155.36 272.20,94.00 324.20,155.36 376.20,94.00 428.20,155.36 437.00,144.98" fill="none" stroke="#30009C" stroke-width="3.7" stroke-linejoin="miter" shape-rendering="auto"/>
</g>
<rect x="112" y="58" width="1" height="258" fill="#FFF"/>
<rect x="167" y="58" width="1" height="258" fill="#FFF"/>
<rect x="36" y="316" width="1" height="12" fill="#000"/>
<rect x="442" y="316" width="1" height="12" fill="#000"/>
<rect x="36" y="327" width="407" height="1" fill="#000"/>
<rect x="443" y="59" width="4" height="1" fill="#000"/>
<rect x="443" y="91" width="4" height="1" fill="#000"/>
<rect x="443" y="123" width="4" height="1" fill="#000"/>
<rect x="443" y="155" width="4" height="1" fill="#000"/>
<rect x="443" y="187" width="4" height="1" fill="#000"/>
<rect x="443" y="219" width="4" height="1" fill="#000"/>
<rect x="443" y="251" width="4" height="1" fill="#000"/>
<rect x="443" y="283" width="4" height="1" fill="#000"/>
<rect x="443" y="315" width="4" height="1" fill="#000"/>
<rect x="37" y="328" width="1" height="4" fill="#000"/>
<rect x="69" y="328" width="1" height="4" fill="#000"/>
<rect x="101" y="328" width="1" height="4" fill="#000"/>
<rect x="133" y="328" width="1" height="4" fill="#000"/>
<rect x="165" y="328" width="1" height="4" fill="#000"/>
<rect x="197" y="328" width="1" height="4" fill="#000"/>
<rect x="229" y="328" width="1" height="4" fill="#000"/>
<rect x="261" y="328" width="1" height="4" fill="#000"/>
<rect x="293" y="328" width="1" height="4" fill="#000"/>
<rect x="325" y="328" width="1" height="4" fill="#000"/>
<rect x="357" y="328" width="1" height="4" fill="#000"/>
<rect x="389" y="328" width="1" height="4" fill="#000"/>
<rect x="421" y="328" width="1" height="4" fill="#000"/>
</svg>
<span class="m" style="left:447px;top:60px;">20</span>
<span class="m" style="left:447px;top:86px;">15</span>
<span class="m" style="left:447px;top:118px;">10</span>
<span class="m" style="left:447px;top:150px;">5</span>
<span class="m" style="left:447px;top:182px;">0</span>
<span class="m" style="left:447px;top:214px;">-5</span>
<span class="m" style="left:447px;top:246px;">-10</span>
<span class="m" style="left:447px;top:278px;">-15</span>
<span class="m" style="left:447px;top:306px;">-20</span>
<span class="m" style="left:447px;top:74px;">Volt</span>
<span class="m" style="left:36px;top:331px;">0</span>
<span class="m" style="left:63.0px;top:331px;">20</span>
<span class="m" style="left:95.0px;top:331px;">40</span>
<span class="m" style="left:127.0px;top:331px;">60</span>
<span class="m" style="left:159.0px;top:331px;">80</span>
<span class="m" style="left:188.0px;top:331px;">100</span>
<span class="m" style="left:220.0px;top:331px;">120</span>
<span class="m" style="left:252.0px;top:331px;">140</span>
<span class="m" style="left:284.0px;top:331px;">160</span>
<span class="m" style="left:316.0px;top:331px;">180</span>
<span class="m" style="left:348.0px;top:331px;">200</span>
<span class="m" style="left:380.0px;top:331px;">220</span>
<span class="m" style="left:407px;top:331px;">mEngU</span>
<div style="left:478px;top:47px;width:16px;height:16px;background:#FFFFFF;"></div>
<div style="left:480px;top:48px;width:14px;height:14px;background:#FFFFFF;"></div>
<div style="left:481px;top:49px;width:12px;height:12px;background:#D4D4FF;"></div>
<div style="left:493px;top:49px;width:1px;height:14px;background:#1C1C38;"></div>
<div style="left:481px;top:61px;width:13px;height:2px;background:#1C1C38;"></div>
<svg style="position:absolute;left:480px;top:48px" width="14" height="14" viewBox="0 0 14 14" preserveAspectRatio="none"><defs><clipPath id="ac1"><path d="M7.5 1.5 L13 7 L10 7 L10 12 L5 12 L5 7 L2 7 Z"/></clipPath></defs><path d="M7.5 1.5 L13 7 L10 7 L10 12 L5 12 L5 7 L2 7 Z" fill="#1C1C38"/><g clip-path="url(#ac1)"><path d="M7.5 1.5 L13 7 L10 7 L10 12 L5 12 L5 7 L2 7 Z" fill="#FFF" transform="translate(-2.6,-1.1)"/></g></svg>
<div style="left:479px;top:64px;width:16px;height:1px;background:#000;"></div>
<div style="left:479px;top:64px;width:1px;height:181px;background:#000;"></div>
<svg style="position:absolute;left:480px;top:65px" width="14" height="179" shape-rendering="crispEdges"><defs><pattern id="dp480_65" width="4" height="2" patternUnits="userSpaceOnUse"><rect width="4" height="2" fill="#E8E8FF"/><rect x="1" y="1" width="1" height="1" fill="#000"/><rect x="3" y="0" width="1" height="1" fill="#000"/></pattern></defs><rect width="14" height="179" fill="url(#dp480_65)"/></svg>
<div style="left:479px;top:244px;width:16px;height:1px;background:#000;"></div>
<div style="left:480px;top:150px;width:13px;height:9px;background:#FFFFFF;"></div>
<div style="left:481px;top:151px;width:11px;height:7px;background:#D4D4FF;"></div>
<div style="left:492px;top:151px;width:1px;height:8px;background:#1C1C38;"></div>
<div style="left:481px;top:158px;width:12px;height:1px;background:#1C1C38;"></div>
<div style="left:480px;top:247px;width:14px;height:14px;background:#FFFFFF;"></div>
<div style="left:481px;top:248px;width:12px;height:12px;background:#D4D4FF;"></div>
<div style="left:493px;top:248px;width:1px;height:14px;background:#1C1C38;"></div>
<div style="left:481px;top:260px;width:13px;height:2px;background:#1C1C38;"></div>
<svg style="position:absolute;left:480px;top:247px" width="14" height="14" viewBox="0 0 14 14" preserveAspectRatio="none"><defs><clipPath id="ac2"><path d="M7.5 12.5 L13 7 L10 7 L10 2 L5 2 L5 7 L2 7 Z"/></clipPath></defs><path d="M7.5 12.5 L13 7 L10 7 L10 2 L5 2 L5 7 L2 7 Z" fill="#1C1C38"/><g clip-path="url(#ac2)"><path d="M7.5 12.5 L13 7 L10 7 L10 2 L5 2 L5 7 L2 7 Z" fill="#FFF" transform="translate(-2.6,-1.1)"/></g></svg>
<div style="left:480px;top:263px;width:14px;height:14px;background:#FFFFFF;"></div>
<div style="left:481px;top:264px;width:12px;height:12px;background:#D4D4FF;"></div>
<div style="left:493px;top:264px;width:1px;height:14px;background:#1C1C38;"></div>
<div style="left:481px;top:276px;width:13px;height:2px;background:#1C1C38;"></div>
<svg style="position:absolute;left:480px;top:263px" width="14" height="14" viewBox="0 0 14 14" preserveAspectRatio="none"><defs><clipPath id="ac3"><path d="M7.5 1.5 L13 7 L10 7 L10 12 L5 12 L5 7 L2 7 Z"/></clipPath></defs><path d="M7.5 1.5 L13 7 L10 7 L10 12 L5 12 L5 7 L2 7 Z" fill="#1C1C38"/><g clip-path="url(#ac3)"><path d="M7.5 1.5 L13 7 L10 7 L10 12 L5 12 L5 7 L2 7 Z" fill="#FFF" transform="translate(-2.6,-1.1)"/></g></svg>
<div style="left:479px;top:276px;width:15px;height:2px;background:#000;"></div>
<div style="left:479px;top:276px;width:1px;height:50px;background:#000;"></div>
<span class="m" style="left:481px;top:289px;line-height:9.5px">&nbsp;5<br>Vo<br>/D</span>
<div style="left:480px;top:327px;width:14px;height:14px;background:#FFFFFF;"></div>
<div style="left:481px;top:328px;width:12px;height:12px;background:#D4D4FF;"></div>
<div style="left:493px;top:328px;width:1px;height:14px;background:#1C1C38;"></div>
<div style="left:481px;top:340px;width:13px;height:2px;background:#1C1C38;"></div>
<svg style="position:absolute;left:480px;top:327px" width="14" height="14" viewBox="0 0 14 14" preserveAspectRatio="none"><defs><clipPath id="ac4"><path d="M7.5 12.5 L13 7 L10 7 L10 2 L5 2 L5 7 L2 7 Z"/></clipPath></defs><path d="M7.5 12.5 L13 7 L10 7 L10 2 L5 2 L5 7 L2 7 Z" fill="#1C1C38"/><g clip-path="url(#ac4)"><path d="M7.5 12.5 L13 7 L10 7 L10 2 L5 2 L5 7 L2 7 Z" fill="#FFF" transform="translate(-2.6,-1.1)"/></g></svg>
<div style="left:18px;top:342px;width:325px;height:1px;background:#000;"></div>
<div style="left:3px;top:343px;width:14px;height:14px;background:#FFFFFF;"></div>
<div style="left:4px;top:344px;width:12px;height:12px;background:#D4D4FF;"></div>
<div style="left:16px;top:344px;width:2px;height:13px;background:#1C1C38;"></div>
<div style="left:4px;top:356px;width:14px;height:1px;background:#1C1C38;"></div>
<svg style="position:absolute;left:3px;top:343px" width="14" height="14" viewBox="0 0 14 14" preserveAspectRatio="none"><defs><clipPath id="ac5"><path d="M1.5 7 L7 1.5 L7 4.5 L12.5 4.5 L12.5 9.5 L7 9.5 L7 12.5 Z"/></clipPath></defs><path d="M1.5 7 L7 1.5 L7 4.5 L12.5 4.5 L12.5 9.5 L7 9.5 L7 12.5 Z" fill="#1C1C38"/><g clip-path="url(#ac5)"><path d="M1.5 7 L7 1.5 L7 4.5 L12.5 4.5 L12.5 9.5 L7 9.5 L7 12.5 Z" fill="#FFF" transform="translate(-2.6,-1.1)"/></g></svg>
<div style="left:17px;top:342px;width:2px;height:15px;background:#000;"></div>
<svg style="position:absolute;left:19px;top:343px" width="323" height="14" shape-rendering="crispEdges"><defs><pattern id="dp19_343" width="4" height="2" patternUnits="userSpaceOnUse"><rect width="4" height="2" fill="#E8E8FF"/><rect x="1" y="1" width="1" height="1" fill="#000"/><rect x="3" y="0" width="1" height="1" fill="#000"/></pattern></defs><rect width="323" height="14" fill="url(#dp19_343)"/></svg>
<div style="left:19px;top:344px;width:13px;height:12px;background:#FFFFFF;"></div>
<div style="left:20px;top:345px;width:11px;height:10px;background:#D4D4FF;"></div>
<div style="left:31px;top:345px;width:1px;height:11px;background:#1C1C38;"></div>
<div style="left:20px;top:355px;width:12px;height:1px;background:#1C1C38;"></div>
<div style="left:344px;top:343px;width:14px;height:14px;background:#FFFFFF;"></div>
<div style="left:345px;top:344px;width:12px;height:12px;background:#D4D4FF;"></div>
<div style="left:357px;top:344px;width:2px;height:13px;background:#1C1C38;"></div>
<div style="left:345px;top:356px;width:14px;height:1px;background:#1C1C38;"></div>
<svg style="position:absolute;left:344px;top:343px" width="14" height="14" viewBox="0 0 14 14" preserveAspectRatio="none"><defs><clipPath id="ac6"><path d="M12.5 7 L7 1.5 L7 4.5 L1.5 4.5 L1.5 9.5 L7 9.5 L7 12.5 Z"/></clipPath></defs><path d="M12.5 7 L7 1.5 L7 4.5 L1.5 4.5 L1.5 9.5 L7 9.5 L7 12.5 Z" fill="#1C1C38"/><g clip-path="url(#ac6)"><path d="M12.5 7 L7 1.5 L7 4.5 L1.5 4.5 L1.5 9.5 L7 9.5 L7 12.5 Z" fill="#FFF" transform="translate(-2.6,-1.1)"/></g></svg>
<div style="left:360px;top:343px;width:14px;height:14px;background:#FFFFFF;"></div>
<div style="left:361px;top:344px;width:12px;height:12px;background:#D4D4FF;"></div>
<div style="left:373px;top:344px;width:2px;height:13px;background:#1C1C38;"></div>
<div style="left:361px;top:356px;width:14px;height:1px;background:#1C1C38;"></div>
<svg style="position:absolute;left:360px;top:343px" width="14" height="14" viewBox="0 0 14 14" preserveAspectRatio="none"><defs><clipPath id="ac7"><path d="M7.5 12.5 L13 7 L10 7 L10 2 L5 2 L5 7 L2 7 Z"/></clipPath></defs><path d="M7.5 12.5 L13 7 L10 7 L10 2 L5 2 L5 7 L2 7 Z" fill="#1C1C38"/><g clip-path="url(#ac7)"><path d="M7.5 12.5 L13 7 L10 7 L10 2 L5 2 L5 7 L2 7 Z" fill="#FFF" transform="translate(-2.6,-1.1)"/></g></svg>
<div style="left:374px;top:342px;width:90px;height:1px;background:#000;"></div>
<div style="left:374px;top:342px;width:1px;height:15px;background:#000;"></div>
<span class="m" style="left:378px;top:345px;">20 mEngU/Div</span>
<div style="left:464px;top:343px;width:14px;height:14px;background:#FFFFFF;"></div>
<div style="left:465px;top:344px;width:12px;height:12px;background:#D4D4FF;"></div>
<div style="left:477px;top:344px;width:2px;height:13px;background:#1C1C38;"></div>
<div style="left:465px;top:356px;width:14px;height:1px;background:#1C1C38;"></div>
<svg style="position:absolute;left:464px;top:343px" width="14" height="14" viewBox="0 0 14 14" preserveAspectRatio="none"><defs><clipPath id="ac8"><path d="M7.5 1.5 L13 7 L10 7 L10 12 L5 12 L5 7 L2 7 Z"/></clipPath></defs><path d="M7.5 1.5 L13 7 L10 7 L10 12 L5 12 L5 7 L2 7 Z" fill="#1C1C38"/><g clip-path="url(#ac8)"><path d="M7.5 1.5 L13 7 L10 7 L10 12 L5 12 L5 7 L2 7 Z" fill="#FFF" transform="translate(-2.6,-1.1)"/></g></svg>
<div style="left:477px;top:342px;width:1px;height:15px;background:#000;"></div>
<div style="left:1px;top:357px;width:494px;height:1px;background:#000;"></div>
<div style="left:498px;top:26px;width:133px;height:22px;background:#FFFFFF;"></div>
<div style="left:499px;top:27px;width:131px;height:20px;background:#1C1C38;"></div>
<div style="left:500px;top:28px;width:129px;height:18px;background:#E8E8FF;"></div>
<div style="left:497px;top:49px;width:55px;height:16px;background:#FFFFFF;"></div>
<div style="left:498px;top:50px;width:53px;height:14px;background:#E8E8FF;"></div>
<div style="left:551px;top:50px;width:2px;height:16px;background:#1C1C38;"></div>
<div style="left:498px;top:64px;width:55px;height:2px;background:#1C1C38;"></div>
<div style="left:554px;top:49px;width:54px;height:16px;background:#FFFFFF;"></div>
<div style="left:555px;top:50px;width:52px;height:14px;background:#E8E8FF;"></div>
<div style="left:607px;top:50px;width:2px;height:16px;background:#1C1C38;"></div>
<div style="left:555px;top:64px;width:54px;height:2px;background:#1C1C38;"></div>
<div style="left:611px;top:49px;width:20px;height:16px;background:#FFFFFF;"></div>
<div style="left:612px;top:50px;width:18px;height:14px;background:#E8E8FF;"></div>
<div style="left:630px;top:50px;width:2px;height:16px;background:#1C1C38;"></div>
<div style="left:612px;top:64px;width:20px;height:2px;background:#1C1C38;"></div>
<div style="left:497px;top:67px;width:55px;height:16px;background:#FFFFFF;"></div>
<div style="left:498px;top:68px;width:53px;height:14px;background:#E8E8FF;"></div>
<div style="left:551px;top:68px;width:2px;height:16px;background:#1C1C38;"></div>
<div style="left:498px;top:82px;width:55px;height:2px;background:#1C1C38;"></div>
<div style="left:554px;top:67px;width:54px;height:16px;background:#FFFFFF;"></div>
<div style="left:555px;top:68px;width:52px;height:14px;background:#E8E8FF;"></div>
<div style="left:607px;top:68px;width:2px;height:16px;background:#1C1C38;"></div>
<div style="left:555px;top:82px;width:54px;height:2px;background:#1C1C38;"></div>
<div style="left:611px;top:67px;width:20px;height:16px;background:#FFFFFF;"></div>
<div style="left:612px;top:68px;width:18px;height:14px;background:#E8E8FF;"></div>
<div style="left:630px;top:68px;width:2px;height:16px;background:#1C1C38;"></div>
<div style="left:612px;top:82px;width:20px;height:2px;background:#1C1C38;"></div>
<div style="left:497px;top:85px;width:55px;height:16px;background:#FFFFFF;"></div>
<div style="left:498px;top:86px;width:53px;height:14px;background:#E8E8FF;"></div>
<div style="left:551px;top:86px;width:2px;height:16px;background:#1C1C38;"></div>
<div style="left:498px;top:100px;width:55px;height:2px;background:#1C1C38;"></div>
<div style="left:554px;top:85px;width:54px;height:16px;background:#FFFFFF;"></div>
<div style="left:555px;top:86px;width:52px;height:14px;background:#E8E8FF;"></div>
<div style="left:607px;top:86px;width:2px;height:16px;background:#1C1C38;"></div>
<div style="left:555px;top:100px;width:54px;height:2px;background:#1C1C38;"></div>
<div style="left:611px;top:85px;width:20px;height:16px;background:#FFFFFF;"></div>
<div style="left:612px;top:86px;width:18px;height:14px;background:#E8E8FF;"></div>
<div style="left:630px;top:86px;width:2px;height:16px;background:#1C1C38;"></div>
<div style="left:612px;top:100px;width:20px;height:2px;background:#1C1C38;"></div>
<div style="left:497px;top:112px;width:76px;height:16px;background:#FFFFFF;"></div>
<div style="left:498px;top:113px;width:74px;height:14px;background:#E8E8FF;"></div>
<div style="left:572px;top:113px;width:2px;height:16px;background:#1C1C38;"></div>
<div style="left:498px;top:127px;width:76px;height:2px;background:#1C1C38;"></div>
<div style="left:575px;top:112px;width:32px;height:16px;background:#FFFFFF;"></div>
<div style="left:576px;top:113px;width:30px;height:14px;background:#E8E8FF;"></div>
<div style="left:606px;top:113px;width:2px;height:16px;background:#1C1C38;"></div>
<div style="left:576px;top:127px;width:32px;height:2px;background:#1C1C38;"></div>
<div style="left:611px;top:112px;width:20px;height:16px;background:#FFFFFF;"></div>
<div style="left:612px;top:113px;width:18px;height:14px;background:#E8E8FF;"></div>
<div style="left:630px;top:113px;width:2px;height:16px;background:#1C1C38;"></div>
<div style="left:612px;top:127px;width:20px;height:2px;background:#1C1C38;"></div>
<div style="left:497px;top:129px;width:76px;height:16px;background:#FFFFFF;"></div>
<div style="left:498px;top:130px;width:74px;height:14px;background:#E8E8FF;"></div>
<div style="left:572px;top:130px;width:2px;height:16px;background:#1C1C38;"></div>
<div style="left:498px;top:144px;width:76px;height:2px;background:#1C1C38;"></div>
<div style="left:575px;top:129px;width:32px;height:16px;background:#FFFFFF;"></div>
<div style="left:576px;top:130px;width:30px;height:14px;background:#E8E8FF;"></div>
<div style="left:606px;top:130px;width:2px;height:16px;background:#1C1C38;"></div>
<div style="left:576px;top:144px;width:32px;height:2px;background:#1C1C38;"></div>
<div style="left:611px;top:129px;width:20px;height:16px;background:#FFFFFF;"></div>
<div style="left:612px;top:130px;width:18px;height:14px;background:#E8E8FF;"></div>
<div style="left:630px;top:130px;width:2px;height:16px;background:#1C1C38;"></div>
<div style="left:612px;top:144px;width:20px;height:2px;background:#1C1C38;"></div>
<div style="left:497px;top:146px;width:76px;height:16px;background:#FFFFFF;"></div>
<div style="left:498px;top:147px;width:74px;height:14px;background:#E8E8FF;"></div>
<div style="left:572px;top:147px;width:2px;height:16px;background:#1C1C38;"></div>
<div style="left:498px;top:161px;width:76px;height:2px;background:#1C1C38;"></div>
<div style="left:575px;top:146px;width:32px;height:16px;background:#FFFFFF;"></div>
<div style="left:576px;top:147px;width:30px;height:14px;background:#E8E8FF;"></div>
<div style="left:606px;top:147px;width:2px;height:16px;background:#1C1C38;"></div>
<div style="left:576px;top:161px;width:32px;height:2px;background:#1C1C38;"></div>
<div style="left:611px;top:146px;width:20px;height:16px;background:#FFFFFF;"></div>
<div style="left:612px;top:147px;width:18px;height:14px;background:#E8E8FF;"></div>
<div style="left:630px;top:147px;width:2px;height:16px;background:#1C1C38;"></div>
<div style="left:612px;top:161px;width:20px;height:2px;background:#1C1C38;"></div>
<div style="left:497px;top:162px;width:76px;height:16px;background:#FFFFFF;"></div>
<div style="left:498px;top:163px;width:74px;height:14px;background:#E8E8FF;"></div>
<div style="left:572px;top:163px;width:2px;height:16px;background:#1C1C38;"></div>
<div style="left:498px;top:177px;width:76px;height:2px;background:#1C1C38;"></div>
<div style="left:575px;top:162px;width:32px;height:16px;background:#FFFFFF;"></div>
<div style="left:576px;top:163px;width:30px;height:14px;background:#E8E8FF;"></div>
<div style="left:606px;top:163px;width:2px;height:16px;background:#1C1C38;"></div>
<div style="left:576px;top:177px;width:32px;height:2px;background:#1C1C38;"></div>
<div style="left:611px;top:162px;width:20px;height:16px;background:#FFFFFF;"></div>
<div style="left:612px;top:163px;width:18px;height:14px;background:#E8E8FF;"></div>
<div style="left:630px;top:163px;width:2px;height:16px;background:#1C1C38;"></div>
<div style="left:612px;top:177px;width:20px;height:2px;background:#1C1C38;"></div>
<div style="left:497px;top:178px;width:76px;height:16px;background:#FFFFFF;"></div>
<div style="left:498px;top:179px;width:74px;height:14px;background:#E8E8FF;"></div>
<div style="left:572px;top:179px;width:2px;height:16px;background:#1C1C38;"></div>
<div style="left:498px;top:193px;width:76px;height:2px;background:#1C1C38;"></div>
<div style="left:575px;top:178px;width:32px;height:16px;background:#FFFFFF;"></div>
<div style="left:576px;top:179px;width:30px;height:14px;background:#E8E8FF;"></div>
<div style="left:606px;top:179px;width:2px;height:16px;background:#1C1C38;"></div>
<div style="left:576px;top:193px;width:32px;height:2px;background:#1C1C38;"></div>
<div style="left:611px;top:178px;width:20px;height:16px;background:#FFFFFF;"></div>
<div style="left:612px;top:179px;width:18px;height:14px;background:#E8E8FF;"></div>
<div style="left:630px;top:179px;width:2px;height:16px;background:#1C1C38;"></div>
<div style="left:612px;top:193px;width:20px;height:2px;background:#1C1C38;"></div>
<div style="left:497px;top:206px;width:110px;height:17px;background:#FFFFFF;"></div>
<div style="left:498px;top:207px;width:108px;height:15px;background:#E8E8FF;"></div>
<div style="left:606px;top:207px;width:2px;height:17px;background:#1C1C38;"></div>
<div style="left:498px;top:222px;width:110px;height:2px;background:#1C1C38;"></div>
<div style="left:611px;top:206px;width:20px;height:17px;background:#FFFFFF;"></div>
<div style="left:612px;top:207px;width:18px;height:15px;background:#E8E8FF;"></div>
<div style="left:630px;top:207px;width:2px;height:17px;background:#1C1C38;"></div>
<div style="left:612px;top:222px;width:20px;height:2px;background:#1C1C38;"></div>
<div style="left:497px;top:224px;width:110px;height:16px;background:#FFFFFF;"></div>
<div style="left:498px;top:225px;width:108px;height:14px;background:#E8E8FF;"></div>
<div style="left:606px;top:225px;width:2px;height:16px;background:#1C1C38;"></div>
<div style="left:498px;top:239px;width:110px;height:2px;background:#1C1C38;"></div>
<div style="left:611px;top:224px;width:20px;height:16px;background:#FFFFFF;"></div>
<div style="left:612px;top:225px;width:18px;height:14px;background:#E8E8FF;"></div>
<div style="left:630px;top:225px;width:2px;height:16px;background:#1C1C38;"></div>
<div style="left:612px;top:239px;width:20px;height:2px;background:#1C1C38;"></div>
<div style="left:497px;top:241px;width:110px;height:17px;background:#FFFFFF;"></div>
<div style="left:498px;top:242px;width:108px;height:15px;background:#E8E8FF;"></div>
<div style="left:606px;top:242px;width:2px;height:17px;background:#1C1C38;"></div>
<div style="left:498px;top:257px;width:110px;height:2px;background:#1C1C38;"></div>
<div style="left:611px;top:241px;width:20px;height:17px;background:#FFFFFF;"></div>
<div style="left:612px;top:242px;width:18px;height:15px;background:#E8E8FF;"></div>
<div style="left:630px;top:242px;width:2px;height:17px;background:#1C1C38;"></div>
<div style="left:612px;top:257px;width:20px;height:2px;background:#1C1C38;"></div>
<div style="left:497px;top:259px;width:110px;height:16px;background:#FFFFFF;"></div>
<div style="left:498px;top:260px;width:108px;height:14px;background:#E8E8FF;"></div>
<div style="left:606px;top:260px;width:2px;height:16px;background:#1C1C38;"></div>
<div style="left:498px;top:274px;width:110px;height:2px;background:#1C1C38;"></div>
<div style="left:611px;top:259px;width:20px;height:16px;background:#FFFFFF;"></div>
<div style="left:612px;top:260px;width:18px;height:14px;background:#E8E8FF;"></div>
<div style="left:630px;top:260px;width:2px;height:16px;background:#1C1C38;"></div>
<div style="left:612px;top:274px;width:20px;height:2px;background:#1C1C38;"></div>
<div style="left:497px;top:276px;width:110px;height:17px;background:#FFFFFF;"></div>
<div style="left:498px;top:277px;width:108px;height:15px;background:#E8E8FF;"></div>
<div style="left:606px;top:277px;width:2px;height:17px;background:#1C1C38;"></div>
<div style="left:498px;top:292px;width:110px;height:2px;background:#1C1C38;"></div>
<div style="left:611px;top:276px;width:20px;height:17px;background:#FFFFFF;"></div>
<div style="left:612px;top:277px;width:18px;height:15px;background:#E8E8FF;"></div>
<div style="left:630px;top:277px;width:2px;height:17px;background:#1C1C38;"></div>
<div style="left:612px;top:292px;width:20px;height:2px;background:#1C1C38;"></div>
<div style="left:497px;top:294px;width:67px;height:16px;background:#FFFFFF;"></div>
<div style="left:498px;top:295px;width:65px;height:14px;background:#E8E8FF;"></div>
<div style="left:563px;top:295px;width:2px;height:16px;background:#1C1C38;"></div>
<div style="left:498px;top:309px;width:67px;height:2px;background:#1C1C38;"></div>
<div style="left:567px;top:294px;width:64px;height:16px;background:#FFFFFF;"></div>
<div style="left:568px;top:295px;width:62px;height:14px;background:#E8E8FF;"></div>
<div style="left:630px;top:295px;width:2px;height:16px;background:#1C1C38;"></div>
<div style="left:568px;top:309px;width:64px;height:2px;background:#1C1C38;"></div>
<div style="left:497px;top:321px;width:110px;height:17px;background:#FFFFFF;"></div>
<div style="left:498px;top:322px;width:108px;height:15px;background:#E8E8FF;"></div>
<div style="left:606px;top:322px;width:2px;height:17px;background:#1C1C38;"></div>
<div style="left:498px;top:337px;width:110px;height:2px;background:#1C1C38;"></div>
<div style="left:611px;top:321px;width:20px;height:17px;background:#FFFFFF;"></div>
<div style="left:612px;top:322px;width:18px;height:15px;background:#E8E8FF;"></div>
<div style="left:630px;top:322px;width:2px;height:17px;background:#1C1C38;"></div>
<div style="left:612px;top:337px;width:20px;height:2px;background:#1C1C38;"></div>
<div style="left:496px;top:340px;width:55px;height:17px;background:#FFFFFF;"></div>
<div style="left:497px;top:341px;width:53px;height:15px;background:#E8E8FF;"></div>
<div style="left:550px;top:341px;width:2px;height:17px;background:#1C1C38;"></div>
<div style="left:497px;top:356px;width:55px;height:2px;background:#1C1C38;"></div>
<div style="left:552px;top:340px;width:56px;height:17px;background:#F8F8FF;"></div>
<div style="left:552px;top:340px;width:2px;height:17px;background:#1C1C38;"></div>
<div style="left:554px;top:356px;width:54px;height:1px;background:repeating-linear-gradient(90deg,#9090B0 0 1px,transparent 1px 2px)"></div>
<svg style="position:absolute;left:611px;top:340px" width="14" height="17" viewBox="0 0 14 17">
<path d="M2 6.5 L6.5 2 L11 6.5 Z" fill="#D4D4FF"/><path d="M2 8.8 L6.5 13.6 L11 8.8 Z" fill="#D4D4FF"/>
<path d="M2 6.5 L6.5 2 M2 8.8 L6.5 13.6 M2 8.8 L11 8.8" stroke="#FFF" stroke-width="1" fill="none"/>
<path d="M6.5 2 L11 6.5 L2 6.5 M11 8.8 L6.5 13.6" stroke="#000" stroke-width="1.1" fill="none"/></svg>
<div style="left:1px;top:370px;width:494px;height:1px;background:#000;"></div>
<div style="left:314px;top:357px;width:2px;height:97px;background:#000;"></div>
<span class="m" style="left:133px;top:359px;">Analysis</span>
<span class="m" style="left:388px;top:359px;">Notes</span>
<span class="m" style="left:68px;top:373px;">Ain0</span>
<span class="m" style="left:135px;top:373px;">Ain0</span>
<span class="m" style="left:201px;top:373px;">Ain0</span>
<span class="m" style="left:68px;top:384px;">max</span>
<span class="m" style="left:135px;top:384px;">area2</span>
<span class="m" style="left:201px;top:384px;">tmax</span>
<span class="m" style="left:3px;top:395px;">Pulse #</span>
<span class="m" style="left:68px;top:395px;">Volt</span>
<span class="m" style="left:135px;top:395px;">Volt-sec</span>
<span class="m" style="left:201px;top:395px;">msec</span>
<span class="m" style="left:3px;top:406px;">1</span>
<span class="m" style="left:68px;top:406px;">5.000</span>
<span class="m" style="left:135px;top:406px;">0.045</span>
<span class="m" style="left:201px;top:406px;">16.250</span>
<span class="m" style="left:3px;top:417px;">2</span>
<span class="m" style="left:68px;top:417px;">5.000</span>
<span class="m" style="left:135px;top:417px;">0.045</span>
<span class="m" style="left:201px;top:417px;">81.250</span>
<div style="left:267px;top:405px;width:1px;height:11px;background:#40E040;"></div>
<div style="left:299px;top:388px;width:1px;height:48px;background:#000;"></div>
<div style="left:299px;top:372px;width:15px;height:15px;background:#FFFFFF;"></div>
<div style="left:300px;top:373px;width:13px;height:13px;background:#D4D4FF;"></div>
<div style="left:313px;top:373px;width:1px;height:15px;background:#1C1C38;"></div>
<div style="left:300px;top:386px;width:14px;height:2px;background:#1C1C38;"></div>
<svg style="position:absolute;left:299px;top:372px" width="15" height="15" viewBox="0 0 14 14" preserveAspectRatio="none"><defs><clipPath id="ac9"><path d="M7.5 1.5 L13 7 L10 7 L10 12 L5 12 L5 7 L2 7 Z"/></clipPath></defs><path d="M7.5 1.5 L13 7 L10 7 L10 12 L5 12 L5 7 L2 7 Z" fill="#1C1C38"/><g clip-path="url(#ac9)"><path d="M7.5 1.5 L13 7 L10 7 L10 12 L5 12 L5 7 L2 7 Z" fill="#FFF" transform="translate(-2.6,-1.1)"/></g></svg>
<svg style="position:absolute;left:300px;top:388px" width="14" height="47" shape-rendering="crispEdges"><defs><pattern id="dp300_388" width="4" height="2" patternUnits="userSpaceOnUse"><rect width="4" height="2" fill="#E8E8FF"/><rect x="1" y="1" width="1" height="1" fill="#000"/><rect x="3" y="0" width="1" height="1" fill="#000"/></pattern></defs><rect width="14" height="47" fill="url(#dp300_388)"/></svg>
<div style="left:300px;top:389px;width:13px;height:12px;background:#FFFFFF;"></div>
<div style="left:301px;top:390px;width:11px;height:10px;background:#D4D4FF;"></div>
<div style="left:312px;top:390px;width:1px;height:11px;background:#1C1C38;"></div>
<div style="left:301px;top:400px;width:12px;height:1px;background:#1C1C38;"></div>
<div style="left:299px;top:435px;width:16px;height:1px;background:#000;"></div>
<div style="left:18px;top:436px;width:265px;height:1px;background:#000;"></div>
<div style="left:3px;top:437px;width:14px;height:15px;background:#FFFFFF;"></div>
<div style="left:4px;top:438px;width:12px;height:13px;background:#D4D4FF;"></div>
<div style="left:16px;top:438px;width:2px;height:14px;background:#1C1C38;"></div>
<div style="left:4px;top:451px;width:14px;height:1px;background:#1C1C38;"></div>
<svg style="position:absolute;left:3px;top:437px" width="14" height="15" viewBox="0 0 14 14" preserveAspectRatio="none"><defs><clipPath id="ac10"><path d="M1.5 7 L7 1.5 L7 4.5 L12.5 4.5 L12.5 9.5 L7 9.5 L7 12.5 Z"/></clipPath></defs><path d="M1.5 7 L7 1.5 L7 4.5 L12.5 4.5 L12.5 9.5 L7 9.5 L7 12.5 Z" fill="#1C1C38"/><g clip-path="url(#ac10)"><path d="M1.5 7 L7 1.5 L7 4.5 L12.5 4.5 L12.5 9.5 L7 9.5 L7 12.5 Z" fill="#FFF" transform="translate(-2.6,-1.1)"/></g></svg>
<div style="left:17px;top:437px;width:2px;height:16px;background:#000;"></div>
<svg style="position:absolute;left:19px;top:437px" width="263" height="16" shape-rendering="crispEdges"><defs><pattern id="dp19_437" width="4" height="2" patternUnits="userSpaceOnUse"><rect width="4" height="2" fill="#E8E8FF"/><rect x="1" y="1" width="1" height="1" fill="#000"/><rect x="3" y="0" width="1" height="1" fill="#000"/></pattern></defs><rect width="263" height="16" fill="url(#dp19_437)"/></svg>
<div style="left:19px;top:438px;width:13px;height:14px;background:#FFFFFF;"></div>
<div style="left:20px;top:439px;width:11px;height:12px;background:#D4D4FF;"></div>
<div style="left:31px;top:439px;width:1px;height:13px;background:#1C1C38;"></div>
<div style="left:20px;top:451px;width:12px;height:1px;background:#1C1C38;"></div>
<div style="left:282px;top:437px;width:1px;height:16px;background:#000;"></div>
<div style="left:283px;top:436px;width:32px;height:1px;background:#FFFFFF;"></div>
<div style="left:284px;top:437px;width:14px;height:15px;background:#FFFFFF;"></div>
<div style="left:285px;top:438px;width:12px;height:13px;background:#D4D4FF;"></div>
<div style="left:297px;top:438px;width:2px;height:14px;background:#1C1C38;"></div>
<div style="left:285px;top:451px;width:14px;height:1px;background:#1C1C38;"></div>
<svg style="position:absolute;left:284px;top:437px" width="14" height="15" viewBox="0 0 14 14" preserveAspectRatio="none"><defs><clipPath id="ac11"><path d="M12.5 7 L7 1.5 L7 4.5 L1.5 4.5 L1.5 9.5 L7 9.5 L7 12.5 Z"/></clipPath></defs><path d="M12.5 7 L7 1.5 L7 4.5 L1.5 4.5 L1.5 9.5 L7 9.5 L7 12.5 Z" fill="#1C1C38"/><g clip-path="url(#ac11)"><path d="M12.5 7 L7 1.5 L7 4.5 L1.5 4.5 L1.5 9.5 L7 9.5 L7 12.5 Z" fill="#FFF" transform="translate(-2.6,-1.1)"/></g></svg>
<div style="left:299px;top:437px;width:15px;height:15px;background:#FFFFFF;"></div>
<div style="left:300px;top:438px;width:13px;height:13px;background:#D4D4FF;"></div>
<div style="left:313px;top:438px;width:1px;height:14px;background:#1C1C38;"></div>
<div style="left:300px;top:451px;width:14px;height:1px;background:#1C1C38;"></div>
<svg style="position:absolute;left:299px;top:437px" width="15" height="15" viewBox="0 0 14 14" preserveAspectRatio="none"><defs><clipPath id="ac12"><path d="M7.5 12.5 L13 7 L10 7 L10 2 L5 2 L5 7 L2 7 Z"/></clipPath></defs><path d="M7.5 12.5 L13 7 L10 7 L10 2 L5 2 L5 7 L2 7 Z" fill="#1C1C38"/><g clip-path="url(#ac12)"><path d="M7.5 12.5 L13 7 L10 7 L10 2 L5 2 L5 7 L2 7 Z" fill="#FFF" transform="translate(-2.6,-1.1)"/></g></svg>
<span class="m" style="left:319px;top:373px;">12/3/93 Turned on generator.</span>
<span class="m" style="left:319px;top:384px;">12/4/93 Reduced air pressure.</span>
<span class="m" style="left:319px;top:395px;">12/5/93 Called supervisor.</span>
<span class="m" style="left:319px;top:406px;">12/6/93 Wrote report.</span>
<span class="m" style="left:319px;top:417px;">12/6/93 Expermented ended.</span>
<div style="left:494px;top:357px;width:2px;height:97px;background:#000;"></div>
<svg style="position:absolute;left:0;top:0" width="634" height="454" shape-rendering="crispEdges"><rect x="496" y="358" width="136" height="95" fill="#FFF"/><path d="M496 401h4v4h-4zM502 411h4v4h-4zM508 419h4v4h-4zM515 427h4v4h-4zM521 434h4v4h-4zM527 440h4v4h-4zM533 444h4v4h-4zM539 447h4v4h-4zM545 449h4v4h-4zM552 450h4v4h-4zM558 449h4v4h-4zM564 447h4v4h-4zM570 444h4v4h-4zM576 440h4v4h-4zM583 434h4v4h-4zM589 427h4v4h-4zM595 419h4v4h-4zM601 411h4v4h-4zM607 401h4v4h-4zM613 391h4v4h-4zM620 381h4v4h-4zM626 370h4v4h-4z" fill="#0000FF"/></svg>
<div style="left:0px;top:453px;width:634px;height:1px;background:#000;"></div>
<div style="left:633px;top:0px;width:1px;height:454px;background:#000;"></div>
<div style="left:632px;top:357px;width:1px;height:97px;background:#000;"></div>
<div style="left:496px;top:357px;width:137px;height:1px;background:#000;"></div>
<span class="t" style="left:101.50px;top:4px;letter-spacing:1.44px">Oscilloscope 55'</span>
<span class="t" style="left:589.50px;top:5px;letter-spacing:0.67px">GWI</span>
<span class="b" style="left:19.50px;top:28px;letter-spacing:0.22px">Save</span>
<span class="b" style="left:81.50px;top:28px;letter-spacing:0.22px">Load</span>
<span class="b" style="left:139.90px;top:28px;letter-spacing:0.78px">Stats</span>
<span class="b" style="left:200.50px;top:28px;letter-spacing:0.74px">Print</span>
<span class="b" style="left:261.50px;top:28px;letter-spacing:0.24px">Help</span>
<span class="b" style="left:313.10px;top:28px;letter-spacing:0.41px">Cursor</span>
<span class="b" style="left:373.30px;top:29px;letter-spacing:0.24px">Oscilloscope</span>
<span class="g" style="left:502.70px;top:29px;letter-spacing:0.40px">Trace #: 5</span>
<span class="r" style="left:509.40px;top:50px;letter-spacing:1.00px">Start</span>
<span class="r" style="left:568.50px;top:50px;letter-spacing:-0.27px">Stop</span>
<span class="r" style="left:618.50px;top:50px;letter-spacing:0.00px">H</span>
<span class="r" style="left:502.70px;top:68px;letter-spacing:0.73px">Trigger</span>
<span class="r" style="left:562.10px;top:68px;letter-spacing:0.37px">Traces</span>
<span class="r" style="left:618.50px;top:68px;letter-spacing:0.00px">H</span>
<span class="r" style="left:502.10px;top:86px;letter-spacing:0.13px">Channel</span>
<span class="r" style="left:557.50px;top:86px;letter-spacing:0.33px">Timebas</span>
<span class="r" style="left:618.50px;top:86px;letter-spacing:0.00px">H</span>
<span class="r" style="left:506.10px;top:113px;letter-spacing:0.75px">Statistics</span>
<span class="r" style="left:582.20px;top:113px;letter-spacing:0.14px">Off</span>
<span class="r" style="left:618.50px;top:113px;letter-spacing:0.00px">H</span>
<span class="r" style="left:516.30px;top:130px;letter-spacing:0.23px">Pulses</span>
<span class="r" style="left:582.20px;top:130px;letter-spacing:0.14px">Off</span>
<span class="r" style="left:618.50px;top:130px;letter-spacing:0.00px">H</span>
<span class="r" style="left:518.30px;top:147px;letter-spacing:1.08px">Filter</span>
<span class="r" style="left:582.20px;top:147px;letter-spacing:0.14px">Off</span>
<span class="r" style="left:618.50px;top:147px;letter-spacing:0.00px">H</span>
<span class="r" style="left:508.60px;top:163px;letter-spacing:0.39px">Calculate</span>
<span class="r" style="left:582.20px;top:163px;letter-spacing:0.14px">Off</span>
<span class="r" style="left:618.50px;top:163px;letter-spacing:0.00px">H</span>
<span class="r" style="left:507.50px;top:179px;letter-spacing:0.79px">Curve Fit</span>
<span class="r" style="left:582.20px;top:179px;letter-spacing:0.14px">Off</span>
<span class="r" style="left:618.50px;top:179px;letter-spacing:0.00px">H</span>
<span class="r" style="left:516.50px;top:207px;letter-spacing:0.32px">Average Off</span>
<span class="r" style="left:618.50px;top:207px;letter-spacing:0.00px">H</span>
<span class="r" style="left:512.20px;top:225px;letter-spacing:0.51px">Maximum Off</span>
<span class="r" style="left:618.50px;top:225px;letter-spacing:0.00px">H</span>
<span class="r" style="left:513.50px;top:242px;letter-spacing:0.62px">Minimum Off</span>
<span class="r" style="left:618.50px;top:242px;letter-spacing:0.00px">H</span>
<span class="r" style="left:515.40px;top:260px;letter-spacing:0.75px">Printing Off</span>
<span class="r" style="left:618.50px;top:260px;letter-spacing:0.00px">H</span>
<span class="r" style="left:510.30px;top:277px;letter-spacing:0.42px">Inspection Off</span>
<span class="r" style="left:618.50px;top:277px;letter-spacing:0.00px">H</span>
<span class="r" style="left:511.60px;top:295px;letter-spacing:-0.22px">Accept</span>
<span class="r" style="left:581.40px;top:295px;letter-spacing:0.39px">Reject</span>
<span class="r" style="left:515.50px;top:322px;letter-spacing:0.13px">Database Off</span>
<span class="r" style="left:618.50px;top:322px;letter-spacing:0.00px">H</span>
<span class="r" style="left:504.10px;top:341px;letter-spacing:-0.50px">LoadDB</span>
<span class="g" style="left:555.50px;top:341px;letter-spacing:0.00px">0</span>
</body></html>
